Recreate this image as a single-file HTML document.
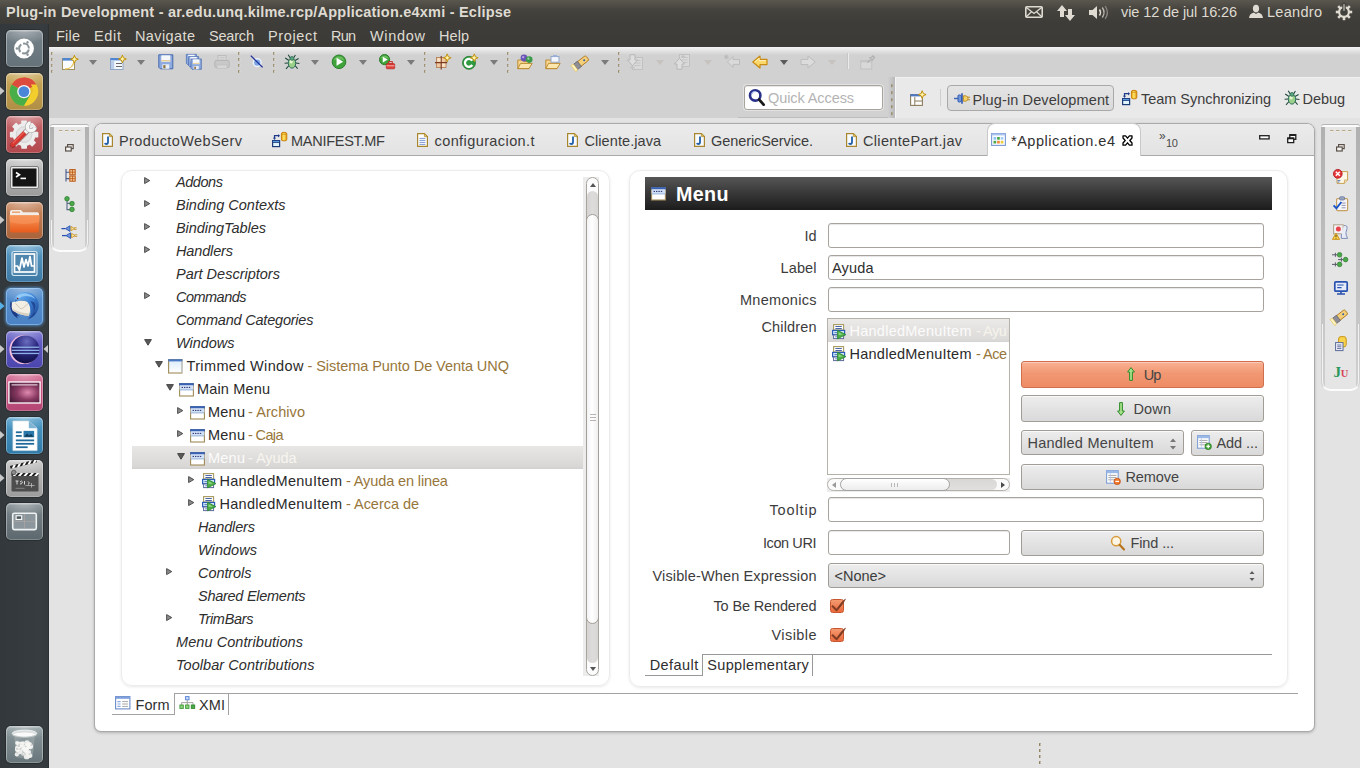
<!DOCTYPE html>
<html><head><meta charset="utf-8"><title>Eclipse</title>
<style>
html,body{margin:0;padding:0;}
body{width:1360px;height:768px;overflow:hidden;position:relative;background:#e3e3e3;font-family:"Liberation Sans",sans-serif;}
.t{position:absolute;white-space:nowrap;line-height:20px;height:20px;}
svg{overflow:visible;}
.inp{box-sizing:border-box;border:1px solid #a8a49d;border-radius:3px;background:#fff;box-shadow:inset 0 1px 1px rgba(0,0,0,.10);}
.btn{box-sizing:border-box;border:1px solid #a19d96;border-radius:3px;background:linear-gradient(#ededed,#d9d9d9);box-shadow:inset 0 1px 0 rgba(255,255,255,.7);}

</style></head><body>
<div style="position:absolute;left:0px;top:0px;width:1360px;height:47px;background:linear-gradient(#5a574f 0px,#45433d 10px,#3d3c38 24px,#3c3b37 47px);"></div>
<div style="position:absolute;left:49px;top:47px;width:1311px;height:71px;background:#d1d1d1;"></div>
<div style="position:absolute;left:49px;top:47px;width:1311px;height:8px;background:linear-gradient(#f4f4f4,#d1d1d1);"></div>
<div style="position:absolute;left:888px;top:77px;width:7px;height:41px;background:linear-gradient(90deg,#d0d0d0,#c2c2c2 60%,#b8b8b8);"></div>
<div style="position:absolute;left:895px;top:77px;width:465px;height:41px;background:#e9e9e9;box-shadow:inset 1px 0 0 #f6f6f6, inset 0 1px 0 #f1f1f1;"></div>
<div style="position:absolute;left:738px;top:117px;width:150px;height:1px;background:#bdbdbd;"></div>
<div style="position:absolute;left:0px;top:24px;width:49px;height:744px;background:linear-gradient(90deg,#32383b,#363c40 85%,#33393c);"></div>
<div style="position:absolute;left:48px;top:24px;width:1px;height:744px;background:#2c3134;"></div>
<span class="t" style="left:6px;top:2.0px;font-size:14.5px;color:#dfdbd2;letter-spacing:0.22px;font-weight:bold;">Plug-in Development - ar.edu.unq.kilme.rcp/Application.e4xmi - Eclipse</span>
<span class="t" style="left:56px;top:25.5px;font-size:14.5px;color:#dfdbd2;letter-spacing:0.21px;">File</span>
<span class="t" style="left:94px;top:25.5px;font-size:14.5px;color:#dfdbd2;letter-spacing:0.67px;">Edit</span>
<span class="t" style="left:135px;top:25.5px;font-size:14.5px;color:#dfdbd2;letter-spacing:0.40px;">Navigate</span>
<span class="t" style="left:209px;top:25.5px;font-size:14.5px;color:#dfdbd2;letter-spacing:-0.19px;">Search</span>
<span class="t" style="left:268px;top:25.5px;font-size:14.5px;color:#dfdbd2;letter-spacing:0.64px;">Project</span>
<span class="t" style="left:331px;top:25.5px;font-size:14.5px;color:#dfdbd2;letter-spacing:-0.80px;">Run</span>
<span class="t" style="left:370px;top:25.5px;font-size:14.5px;color:#dfdbd2;letter-spacing:0.68px;">Window</span>
<span class="t" style="left:439px;top:25.5px;font-size:14.5px;color:#dfdbd2;letter-spacing:0.06px;">Help</span>
<span class="t" style="left:1121px;top:2.0px;font-size:14.5px;color:#dfdbd2;letter-spacing:-0.09px;">vie 12 de jul 16:26</span>
<span class="t" style="left:1267px;top:2.0px;font-size:14.5px;color:#dfdbd2;letter-spacing:0.30px;">Leandro</span>
<svg style="position:absolute;left:1025px;top:6px" width="18" height="12" viewBox="0 0 18 12"><rect x="0.8" y="0.8" width="16.4" height="10.4" rx="1" fill="none" stroke="#dfdbd2" stroke-width="1.6"/><path d="M1 1.2 L9 7.5 L17 1.2 M1 11 L6.5 5.8 M17 11 L11.5 5.8" fill="none" stroke="#dfdbd2" stroke-width="1.3"/></svg>
<svg style="position:absolute;left:1057px;top:5px" width="18" height="16" viewBox="0 0 18 16"><path d="M5 0 L10 6 H7 V12 H3 V6 H0 Z" fill="#dfdbd2"/><path d="M13 16 L8 10 H11 V4 H15 V10 H18 Z" fill="#dfdbd2"/></svg>
<svg style="position:absolute;left:1089px;top:5px" width="20" height="15" viewBox="0 0 20 15"><path d="M0 5 H3.5 L8 1 V14 L3.5 10 H0 Z" fill="#dfdbd2"/><path d="M10.5 4.5 Q12.5 7.5 10.5 10.5" fill="none" stroke="#dfdbd2" stroke-width="1.5"/><path d="M13.3 2.5 Q16.8 7.5 13.3 12.5" fill="none" stroke="#b9b5ad" stroke-width="1.4"/><path d="M16.2 1 Q20.6 7.5 16.2 14" fill="none" stroke="#8d8a84" stroke-width="1.2"/></svg>
<svg style="position:absolute;left:1249px;top:5px" width="14" height="13" viewBox="0 0 14 13"><ellipse cx="7" cy="3.6" rx="3.1" ry="3.8" fill="#dfdbd2"/><path d="M0 13 Q0.5 8.5 5 7.6 L7 9 L9 7.6 Q13.5 8.5 14 13 Z" fill="#dfdbd2"/></svg>
<svg style="position:absolute;left:1336px;top:4px" width="16" height="16" viewBox="0 0 16 16"><circle cx="8" cy="8" r="4.9" fill="none" stroke="#dfdbd2" stroke-width="2.2"/><rect x="6.7" y="-0.2" width="2.6" height="3.4" fill="#dfdbd2" transform="rotate(45 8 8)"/><rect x="6.7" y="-0.2" width="2.6" height="3.4" fill="#dfdbd2" transform="rotate(90 8 8)"/><rect x="6.7" y="-0.2" width="2.6" height="3.4" fill="#dfdbd2" transform="rotate(135 8 8)"/><rect x="6.7" y="-0.2" width="2.6" height="3.4" fill="#dfdbd2" transform="rotate(180 8 8)"/><rect x="6.7" y="-0.2" width="2.6" height="3.4" fill="#dfdbd2" transform="rotate(225 8 8)"/><rect x="6.7" y="-0.2" width="2.6" height="3.4" fill="#dfdbd2" transform="rotate(270 8 8)"/><rect x="6.7" y="-0.2" width="2.6" height="3.4" fill="#dfdbd2" transform="rotate(315 8 8)"/><rect x="6.9" y="-0.5" width="2.2" height="8" fill="#dfdbd2" stroke="#3f3e3a" stroke-width="1.2"/></svg>
<div style="position:absolute;left:5.5px;top:29.5px;width:37px;height:37px;background:linear-gradient(#76828a,#66727a);border-radius:5px;box-shadow:inset 0 0 0 1px rgba(255,255,255,.22),inset 0 1px 0 1px rgba(255,255,255,.18),0 0 0 1px rgba(0,0,0,.22);overflow:hidden;"><div style="position:absolute;left:0;top:0;width:37px;height:37px;background:radial-gradient(ellipse 26px 14px at 50% 0%,rgba(255,255,255,.38),rgba(255,255,255,0));"></div><svg width="37" height="37" viewBox="0.5 0 37 37" style="position:absolute;left:0;top:0"><g transform="translate(-0.5 0)"><circle cx="19" cy="18.5" r="9.9" fill="#fff"/><circle cx="19" cy="18.5" r="4.9" fill="none" stroke="#8a9498" stroke-width="2" stroke-dasharray="8.4 1.86" stroke-dashoffset="-1"/><g transform="rotate(180 19 18.5)"><circle cx="26.1" cy="18.5" r="1.25" fill="#8a9498"/></g><g transform="rotate(-60 19 18.5)"><circle cx="26.1" cy="18.5" r="1.25" fill="#8a9498"/></g><g transform="rotate(60 19 18.5)"><circle cx="26.1" cy="18.5" r="1.25" fill="#8a9498"/></g></g></svg></div>
<div style="position:absolute;left:5.5px;top:72.5px;width:37px;height:37px;background:linear-gradient(#c9a85a,#b08f45);border-radius:5px;box-shadow:inset 0 0 0 1px rgba(255,255,255,.22),inset 0 1px 0 1px rgba(255,255,255,.18),0 0 0 1px rgba(0,0,0,.22);overflow:hidden;"><div style="position:absolute;left:0;top:0;width:37px;height:37px;background:radial-gradient(ellipse 26px 14px at 50% 0%,rgba(255,255,255,.38),rgba(255,255,255,0));"></div><svg width="37" height="37" viewBox="0.5 0 37 37" style="position:absolute;left:0;top:0"><g transform="translate(-0.6 0.1) translate(19 18.5) scale(1.05) translate(-19 -18.5)"><circle cx="19" cy="18.5" r="13.5" fill="#e8bf2a"/><path d="M19 18.5 L7.3 11.75 A13.5 13.5 0 0 1 30.7 11.75 Z" fill="#dd4b3e"/><path d="M19 5 A13.5 13.5 0 0 1 30.7 11.75 L19 11.75 Z" fill="#dd4b3e"/><path d="M7.3 11.75 A13.5 13.5 0 0 0 19 32 L24.8 21.9 L19 18.5 Z" fill="#4aae48"/><path d="M19 18.5 L13.2 21.9 L19 32 A13.5 13.5 0 0 0 19.5 32 L25 22 Z" fill="#4aae48"/><path d="M30.7 11.75 A13.5 13.5 0 0 1 19 32 L25 21.9 A6.8 6.8 0 0 0 25.6 11.75 Z" fill="#f3cf2e"/><circle cx="19" cy="18.5" r="6.4" fill="#f4f4f4"/><circle cx="19" cy="18.5" r="5.1" fill="#4a86d8"/></g></svg></div>
<svg style="position:absolute;left:0px;top:87px" width="5" height="8" viewBox="0 0 5 8"><path d="M0 0 L4.5 4 L0 8 Z" fill="#c8c8c8"/></svg>
<div style="position:absolute;left:5.5px;top:115.5px;width:37px;height:37px;background:linear-gradient(#c66a6e,#b2484e);border-radius:5px;box-shadow:inset 0 0 0 1px rgba(255,255,255,.22),inset 0 1px 0 1px rgba(255,255,255,.18),0 0 0 1px rgba(0,0,0,.22);overflow:hidden;"><div style="position:absolute;left:0;top:0;width:37px;height:37px;background:radial-gradient(ellipse 26px 14px at 50% 0%,rgba(255,255,255,.38),rgba(255,255,255,0));"></div><svg width="37" height="37" viewBox="0.5 0 37 37" style="position:absolute;left:0;top:0"><rect x="15.7" y="4.4" width="5.8" height="6" rx=".8" fill="#ededed" transform="rotate(0 18.6 18.6)"/><rect x="15.7" y="4.4" width="5.8" height="6" rx=".8" fill="#ededed" transform="rotate(45 18.6 18.6)"/><rect x="15.7" y="4.4" width="5.8" height="6" rx=".8" fill="#ededed" transform="rotate(90 18.6 18.6)"/><rect x="15.7" y="4.4" width="5.8" height="6" rx=".8" fill="#ededed" transform="rotate(135 18.6 18.6)"/><rect x="15.7" y="4.4" width="5.8" height="6" rx=".8" fill="#ededed" transform="rotate(180 18.6 18.6)"/><rect x="15.7" y="4.4" width="5.8" height="6" rx=".8" fill="#ededed" transform="rotate(225 18.6 18.6)"/><rect x="15.7" y="4.4" width="5.8" height="6" rx=".8" fill="#ededed" transform="rotate(270 18.6 18.6)"/><rect x="15.7" y="4.4" width="5.8" height="6" rx=".8" fill="#ededed" transform="rotate(315 18.6 18.6)"/><circle cx="18.6" cy="18.6" r="11.4" fill="#ededed"/><circle cx="18.6" cy="18.6" r="7.8" fill="#e4e4e4" stroke="#d2d2d2" stroke-width="1"/><path d="M7.4 29.2 L20.6 16" stroke="#7a1616" stroke-width="5.4" stroke-linecap="round" opacity=".55"/><path d="M7.2 28.8 L20.4 15.6" stroke="#d8352e" stroke-width="4.4" stroke-linecap="round"/><path d="M7.6 27.2 L19.6 15.2" stroke="#f0746a" stroke-width="1.1" stroke-linecap="round" opacity=".8"/><path d="M19.4 16.8 L23 13.2" stroke="#9a9a9a" stroke-width="5" /><path d="M19.6 16.6 L23.2 13" stroke="#f4f4f4" stroke-width="3.8"/><path d="M29.47 11.28 A3.9 3.9 0 1 1 25.12 6.93" fill="none" stroke="#9c9c9c" stroke-width="4.4" stroke-linecap="butt"/><path d="M29.47 11.28 A3.9 3.9 0 1 1 25.12 6.93" fill="none" stroke="#f6f6f6" stroke-width="3.4" stroke-linecap="butt"/></svg></div>
<div style="position:absolute;left:5.5px;top:158.5px;width:37px;height:37px;background:linear-gradient(#c4c4c4,#9b9b9b);border-radius:5px;box-shadow:inset 0 0 0 1px rgba(255,255,255,.22),inset 0 1px 0 1px rgba(255,255,255,.18),0 0 0 1px rgba(0,0,0,.22);overflow:hidden;"><div style="position:absolute;left:0;top:0;width:37px;height:37px;background:radial-gradient(ellipse 26px 14px at 50% 0%,rgba(255,255,255,.38),rgba(255,255,255,0));"></div><svg width="37" height="37" viewBox="0.5 0 37 37" style="position:absolute;left:0;top:0"><rect x="5" y="7.5" width="28" height="22" rx="1.5" fill="#e9e9e9" stroke="#7c7c7c" stroke-width="1"/><rect x="7" y="9.5" width="24" height="18" fill="#141414"/><path d="M10.5 13.5 L14 15.7 L10.5 18" fill="none" stroke="#fff" stroke-width="1.6"/><rect x="15" y="18.6" width="5.5" height="1.6" fill="#fff"/></svg></div>
<div style="position:absolute;left:5.5px;top:201.5px;width:37px;height:37px;background:linear-gradient(#c98a62,#a9623a);border-radius:5px;box-shadow:inset 0 0 0 1px rgba(255,255,255,.22),inset 0 1px 0 1px rgba(255,255,255,.18),0 0 0 1px rgba(0,0,0,.22);overflow:hidden;"><div style="position:absolute;left:0;top:0;width:37px;height:37px;background:radial-gradient(ellipse 26px 14px at 50% 0%,rgba(255,255,255,.38),rgba(255,255,255,0));"></div><svg width="37" height="37" viewBox="0.5 0 37 37" style="position:absolute;left:0;top:0"><path d="M4.5 10 Q4.5 8 6.5 8 H15.5 L17.5 10.2 H32 Q33.5 10.2 33.5 12 V14 H4.5 Z" fill="#f4ede6"/><rect x="6.5" y="9.6" width="8" height="1.1" fill="#e8874a"/><defs><linearGradient id="flg" x1="0" y1="0" x2="0" y2="1"><stop offset="0" stop-color="#f79a5a"/><stop offset="1" stop-color="#e85a1c"/></linearGradient></defs><path d="M4 13.2 H34 L33.2 29 Q33 30.5 31.5 30.5 H6.5 Q5 30.5 4.8 29 Z" fill="url(#flg)"/><path d="M4 13.2 H34 L33.7 20 Q19 24 4.4 20 Z" fill="#f7935a" opacity=".7"/></svg></div>
<svg style="position:absolute;left:0px;top:216px" width="5" height="8" viewBox="0 0 5 8"><path d="M0 0 L4.5 4 L0 8 Z" fill="#c8c8c8"/></svg>
<div style="position:absolute;left:5.5px;top:244.5px;width:37px;height:37px;background:linear-gradient(#5a9cc6,#3c78a3);border-radius:5px;box-shadow:inset 0 0 0 1px rgba(255,255,255,.22),inset 0 1px 0 1px rgba(255,255,255,.18),0 0 0 1px rgba(0,0,0,.22);overflow:hidden;"><div style="position:absolute;left:0;top:0;width:37px;height:37px;background:radial-gradient(ellipse 26px 14px at 50% 0%,rgba(255,255,255,.38),rgba(255,255,255,0));"></div><svg width="37" height="37" viewBox="0.5 0 37 37" style="position:absolute;left:0;top:0"><rect x="6.5" y="6.5" width="25" height="24" rx="2" fill="#4f86ad" stroke="#d6e7f2" stroke-width="1.2"/><rect x="9" y="9" width="20" height="18" fill="none" stroke="#fff" stroke-width="1.7"/><path d="M9.5 21 L12 21 L14 25 L16.5 13 L18.5 22 L20.5 14.5 L22.5 21 L24.5 11.5 L26 21 L28.5 21" fill="none" stroke="#fff" stroke-width="1.7" stroke-linejoin="round"/></svg></div>
<div style="position:absolute;left:5.5px;top:287.5px;width:37px;height:37px;background:linear-gradient(#5a92d0,#4a82c4);border-radius:5px;box-shadow:inset 0 0 0 1px rgba(255,255,255,.22),inset 0 1px 0 1px rgba(255,255,255,.18),0 0 0 1px rgba(0,0,0,.22);overflow:hidden;box-shadow:inset 0 0 0 1px rgba(160,210,255,.55),0 0 3px 1px rgba(90,160,230,.7);"><div style="position:absolute;left:0;top:0;width:37px;height:37px;background:radial-gradient(ellipse 26px 14px at 50% 0%,rgba(255,255,255,.38),rgba(255,255,255,0));"></div><svg width="37" height="37" viewBox="0.5 0 37 37" style="position:absolute;left:0;top:0"><defs><linearGradient id="tbg" x1="0" y1="0" x2="1" y2="1"><stop offset="0" stop-color="#7ec0f4"/><stop offset=".45" stop-color="#3f86d8"/><stop offset="1" stop-color="#1c3f8c"/></linearGradient></defs><path d="M5.4 12.5 Q3.4 19 6.6 25 Q9 29 12.4 30.4 L11.4 27.6 L14 28.6 Q9 24 7 17 Z" fill="#1d3a86"/><path d="M6.4 14.4 Q14 11.2 23.4 14.2 Q26 20.6 23.4 27.8 Q14.6 27.2 7 22.4 Q5.6 18.6 6.4 14.4 Z" fill="#f3eee4"/><path d="M8 23 Q15 27.6 23 27.8 L23.6 25.6 Q15 25 7.4 21 Z" fill="#d9d0c0"/><path d="M10 15.4 L14.6 20.4 Q16 21.2 17.4 20.2 L23 15.2" fill="none" stroke="#cfc6b6" stroke-width="1"/><path d="M9.4 13.8 Q8.6 10.4 10.6 8 Q13 4.6 19 4 Q27 4 31 10 Q34.4 15.6 32.6 21.4 Q30.4 28 22 31.6 Q26.4 27.4 25.4 22 Q24.8 17 21.6 13.4 Q18.6 11 15 11.8 Q12.8 12.2 12 13.6 Q10.6 12.8 9.4 13.8 Z" fill="url(#tbg)"/><path d="M11 8.6 Q15 5 21 5.4 Q27 6.2 30 11 Q26 8 21 8 Q15.4 8 13 11 Z" fill="#9fd2fa" opacity=".8"/><path d="M24.6 13 Q28.6 17.4 28.4 23.4 Q30.8 19 29 14.6 Z M22.6 30.8 Q27.6 27.6 29.4 23.4 Q30.6 26 27 29 Z" fill="#1c3c8a" opacity=".75"/><circle cx="12.2" cy="10.6" r=".8" fill="#7a1a1a"/><path d="M9.4 13.8 L10 11.2 L11.8 12.6 Z" fill="#2a5cb0"/></svg></div>
<svg style="position:absolute;left:0px;top:302px" width="5" height="8" viewBox="0 0 5 8"><path d="M0 0 L4.5 4 L0 8 Z" fill="#58b0e8"/></svg>
<div style="position:absolute;left:5.5px;top:330.5px;width:37px;height:37px;background:linear-gradient(#6c68ca,#4a44ae);border-radius:5px;box-shadow:inset 0 0 0 1px rgba(255,255,255,.22),inset 0 1px 0 1px rgba(255,255,255,.18),0 0 0 1px rgba(0,0,0,.22);overflow:hidden;"><div style="position:absolute;left:0;top:0;width:37px;height:37px;background:radial-gradient(ellipse 26px 14px at 50% 0%,rgba(255,255,255,.38),rgba(255,255,255,0));"></div><svg width="37" height="37" viewBox="0.5 0 37 37" style="position:absolute;left:0;top:0"><defs><radialGradient id="ecg" cx="0.55" cy="0.22" r="0.85"><stop offset="0" stop-color="#6a6cc0"/><stop offset="0.45" stop-color="#2c2a80"/><stop offset="1" stop-color="#0c0a3c"/></radialGradient></defs><circle cx="18.3" cy="18.7" r="14.4" fill="#f3bfe0"/><circle cx="19.8" cy="18.4" r="14" fill="url(#ecg)"/><rect x="6.6" y="15.6" width="27" height="1.3" fill="#8fb2e6"/><rect x="6.2" y="18.7" width="27.6" height="1.3" fill="#8fb2e6"/><rect x="6.6" y="21.8" width="27" height="1.3" fill="#8fb2e6"/></svg></div>
<svg style="position:absolute;left:0px;top:345px" width="5" height="8" viewBox="0 0 5 8"><path d="M0 0 L4.5 4 L0 8 Z" fill="#c8c8c8"/></svg>
<svg style="position:absolute;left:43px;top:345px" width="5" height="8" viewBox="0 0 5 8"><path d="M5 0 L0.5 4 L5 8 Z" fill="#c8c8c8"/></svg>
<div style="position:absolute;left:5.5px;top:373.5px;width:37px;height:37px;background:linear-gradient(#d0628c,#b44574);border-radius:5px;box-shadow:inset 0 0 0 1px rgba(255,255,255,.22),inset 0 1px 0 1px rgba(255,255,255,.18),0 0 0 1px rgba(0,0,0,.22);overflow:hidden;"><div style="position:absolute;left:0;top:0;width:37px;height:37px;background:radial-gradient(ellipse 26px 14px at 50% 0%,rgba(255,255,255,.38),rgba(255,255,255,0));"></div><svg width="37" height="37" viewBox="0.5 0 37 37" style="position:absolute;left:0;top:0"><defs><radialGradient id="pkg" cx="0.6" cy="0.5" r="0.75"><stop offset="0" stop-color="#e08ab0"/><stop offset="0.45" stop-color="#8a3a62"/><stop offset="1" stop-color="#3a1430"/></radialGradient></defs><rect x="3.4" y="8" width="31.2" height="21" fill="url(#pkg)" stroke="#fff" stroke-width="1.3"/><rect x="6" y="10.4" width="26" height="1" fill="#f6eaf2"/></svg></div>
<div style="position:absolute;left:5.5px;top:416.5px;width:37px;height:37px;background:linear-gradient(#4f9cc8,#2f7aa8);border-radius:5px;box-shadow:inset 0 0 0 1px rgba(255,255,255,.22),inset 0 1px 0 1px rgba(255,255,255,.18),0 0 0 1px rgba(0,0,0,.22);overflow:hidden;"><div style="position:absolute;left:0;top:0;width:37px;height:37px;background:radial-gradient(ellipse 26px 14px at 50% 0%,rgba(255,255,255,.38),rgba(255,255,255,0));"></div><svg width="37" height="37" viewBox="0.5 0 37 37" style="position:absolute;left:0;top:0"><g transform="translate(19.5 18.8) scale(1.18 1.04) translate(-19.75 -18.75)"><path d="M9.5 4.5 H23 L30 11.5 V33 H9.5 Z" fill="#fff" stroke="#d0dbe2" stroke-width="0.6"/><path d="M23 4.5 L30 11.5 H23 Z" fill="#7fb3d4"/><rect x="12" y="14.5" width="5" height="1.7" fill="#1f6a9a"/><rect x="12" y="18" width="5" height="1.7" fill="#1f6a9a"/><rect x="18.5" y="14" width="9" height="6.2" fill="#2a78aa"/><path d="M19 19.6 L21.5 16.5 L23.3 18.5 L25 17 L27 19.6 Z" fill="#123e5c"/><rect x="12" y="22.3" width="15.5" height="1.7" fill="#1f6a9a"/><rect x="12" y="25.6" width="15.5" height="1.7" fill="#1f6a9a"/><rect x="12" y="28.9" width="10" height="1.7" fill="#1f6a9a"/></g></svg></div>
<svg style="position:absolute;left:0px;top:431px" width="5" height="8" viewBox="0 0 5 8"><path d="M0 0 L4.5 4 L0 8 Z" fill="#c8c8c8"/></svg>
<div style="position:absolute;left:5.5px;top:459.5px;width:37px;height:37px;background:linear-gradient(#c2c2c2,#9c9c9c);border-radius:5px;box-shadow:inset 0 0 0 1px rgba(255,255,255,.22),inset 0 1px 0 1px rgba(255,255,255,.18),0 0 0 1px rgba(0,0,0,.22);overflow:hidden;"><div style="position:absolute;left:0;top:0;width:37px;height:37px;background:radial-gradient(ellipse 26px 14px at 50% 0%,rgba(255,255,255,.38),rgba(255,255,255,0));"></div><svg width="37" height="37" viewBox="0.5 0 37 37" style="position:absolute;left:0;top:0"><rect x="6" y="16" width="27" height="15.5" rx="1" fill="#4d4d4d"/><rect x="6" y="13" width="27" height="3" fill="#1d1d1d"/><path d="M7.0 16 L9.6 13 H12.3 L9.7 16 Z" fill="#fff"/><path d="M12.4 16 L15.0 13 H17.700000000000003 L15.1 16 Z" fill="#fff"/><path d="M17.8 16 L20.4 13 H23.1 L20.5 16 Z" fill="#fff"/><path d="M23.200000000000003 16 L25.800000000000004 13 H28.500000000000004 L25.900000000000002 16 Z" fill="#fff"/><path d="M28.6 16 L31.200000000000003 13 H33.900000000000006 L31.3 16 Z" fill="#fff"/><g transform="rotate(-14 7 12)"><rect x="6" y="5.5" width="27" height="3" fill="#1d1d1d"/><path d="M7.0 8.5 L9.6 5.5 H12.3 L9.7 8.5 Z" fill="#fff"/><path d="M12.4 8.5 L15.0 5.5 H17.700000000000003 L15.1 8.5 Z" fill="#fff"/><path d="M17.8 8.5 L20.4 5.5 H23.1 L20.5 8.5 Z" fill="#fff"/><path d="M23.200000000000003 8.5 L25.800000000000004 5.5 H28.500000000000004 L25.900000000000002 8.5 Z" fill="#fff"/><path d="M28.6 8.5 L31.200000000000003 5.5 H33.900000000000006 L31.3 8.5 Z" fill="#fff"/></g><circle cx="8.3" cy="12.5" r="2.3" fill="#8a8a8a" stroke="#333" stroke-width="0.6"/><path d="M10 21 h3 m-1.5 0 v3.5 M14.5 22 q1.5 -2 2.5 0 q-1 2.5 -2.5 2 M19 21 v3.5 M22.5 21.5 q2 1 0.5 3" stroke="#e6e6e6" stroke-width="0.9" fill="none"/><path d="M20 25.5 h9 M26 23 v4.5" stroke="#c9c9c9" stroke-width="0.7"/><path d="M10 28.3 h9" stroke="#9a9a9a" stroke-width="0.7"/></svg></div>
<svg style="position:absolute;left:0px;top:474px" width="5" height="8" viewBox="0 0 5 8"><path d="M0 0 L4.5 4 L0 8 Z" fill="#c8c8c8"/></svg>
<div style="position:absolute;left:5.5px;top:502.5px;width:37px;height:37px;background:linear-gradient(#7b878c,#5c686e);border-radius:5px;box-shadow:inset 0 0 0 1px rgba(255,255,255,.22),inset 0 1px 0 1px rgba(255,255,255,.18),0 0 0 1px rgba(0,0,0,.22);overflow:hidden;"><div style="position:absolute;left:0;top:0;width:37px;height:37px;background:radial-gradient(ellipse 26px 14px at 50% 0%,rgba(255,255,255,.38),rgba(255,255,255,0));"></div><svg width="37" height="37" viewBox="0.5 0 37 37" style="position:absolute;left:0;top:0"><rect x="7.2" y="10.2" width="23.6" height="16.4" rx="1.5" fill="#8b979c" stroke="#eef2f3" stroke-width="1.6"/><path d="M19 11 V26 M8 18.4 H30" stroke="#b7a6a6" stroke-width="0.6"/><rect x="10.6" y="12.8" width="5.6" height="3.6" fill="#4a555a" stroke="#fff" stroke-width="1.1"/></svg></div>
<div style="position:absolute;left:5.5px;top:725.5px;width:37px;height:37px;background:linear-gradient(#8c9a9e,#68767b);border-radius:5px;box-shadow:inset 0 0 0 1px rgba(255,255,255,.22),inset 0 1px 0 1px rgba(255,255,255,.18),0 0 0 1px rgba(0,0,0,.22);overflow:hidden;"><div style="position:absolute;left:0;top:0;width:37px;height:37px;background:radial-gradient(ellipse 26px 14px at 50% 0%,rgba(255,255,255,.38),rgba(255,255,255,0));"></div><svg width="37" height="37" viewBox="0.5 0 37 37" style="position:absolute;left:0;top:0"><defs><linearGradient id="trg" x1="0" x2="1"><stop offset="0" stop-color="#aab4b6"/><stop offset=".5" stop-color="#8e9a9e"/><stop offset="1" stop-color="#aab4b6"/></linearGradient></defs><path d="M13.6 8 L15.8 31 Q24 33.4 32.2 31 L34.4 8 Z" fill="url(#trg)" opacity=".55" transform="translate(-5 0)"/><g transform="translate(-5 0)"><circle cx="20.8" cy="18.2" r="2.6" fill="#f6f6f4" opacity=".9"/><circle cx="16.7" cy="23.8" r="2.2" fill="#f6f6f4" opacity=".9"/><circle cx="16.5" cy="23.4" r="1.7" fill="#f6f6f4" opacity=".9"/><circle cx="22.7" cy="17.0" r="1.7" fill="#f6f6f4" opacity=".9"/><circle cx="22.5" cy="28.0" r="1.8" fill="#f6f6f4" opacity=".9"/><circle cx="19.2" cy="25.1" r="3.1" fill="#f6f6f4" opacity=".9"/><circle cx="25.0" cy="21.8" r="3.2" fill="#f6f6f4" opacity=".9"/><circle cx="16.3" cy="28.4" r="2.1" fill="#f6f6f4" opacity=".9"/><circle cx="17.9" cy="17.7" r="2.1" fill="#f6f6f4" opacity=".9"/><circle cx="29.0" cy="18.6" r="2.5" fill="#f6f6f4" opacity=".9"/><circle cx="26.0" cy="21.4" r="2.5" fill="#f6f6f4" opacity=".9"/><circle cx="16.5" cy="16.9" r="1.9" fill="#f6f6f4" opacity=".9"/><circle cx="26.7" cy="22.2" r="2.1" fill="#f6f6f4" opacity=".9"/><circle cx="25.2" cy="22.6" r="2.1" fill="#f6f6f4" opacity=".9"/><circle cx="28.6" cy="26.1" r="2.0" fill="#f6f6f4" opacity=".9"/><circle cx="25.0" cy="23.6" r="3.0" fill="#f6f6f4" opacity=".9"/><circle cx="27.5" cy="20.2" r="3.2" fill="#f6f6f4" opacity=".9"/><circle cx="17.4" cy="22.1" r="2.8" fill="#f6f6f4" opacity=".9"/><circle cx="18.0" cy="23.1" r="1.7" fill="#f6f6f4" opacity=".9"/><circle cx="26.5" cy="27.1" r="2.5" fill="#f6f6f4" opacity=".9"/><circle cx="29.9" cy="20.5" r="2.7" fill="#f6f6f4" opacity=".9"/><circle cx="25.3" cy="24.4" r="2.3" fill="#f6f6f4" opacity=".9"/><circle cx="29.4" cy="29.7" r="2.4" fill="#f6f6f4" opacity=".9"/><circle cx="26.5" cy="16.9" r="2.7" fill="#f6f6f4" opacity=".9"/><circle cx="26.2" cy="30.4" r="2.9" fill="#f6f6f4" opacity=".9"/><circle cx="20.2" cy="21.6" r="2.7" fill="#f6f6f4" opacity=".9"/><circle cx="16.3" cy="23.0" r=".9" fill="#c9cccc" opacity=".8"/><circle cx="18.6" cy="18.5" r=".9" fill="#c9cccc" opacity=".8"/><circle cx="16.9" cy="27.0" r=".9" fill="#c9cccc" opacity=".8"/><circle cx="18.0" cy="20.2" r=".9" fill="#c9cccc" opacity=".8"/><circle cx="22.1" cy="28.3" r=".9" fill="#c9cccc" opacity=".8"/><circle cx="17.2" cy="22.8" r=".9" fill="#c9cccc" opacity=".8"/><circle cx="24.5" cy="28.5" r=".9" fill="#c9cccc" opacity=".8"/><circle cx="28.7" cy="28.2" r=".9" fill="#c9cccc" opacity=".8"/><circle cx="20.3" cy="22.4" r=".9" fill="#c9cccc" opacity=".8"/><circle cx="21.6" cy="28.5" r=".9" fill="#c9cccc" opacity=".8"/><circle cx="30.8" cy="19.0" r=".9" fill="#c9cccc" opacity=".8"/><circle cx="18.7" cy="20.0" r=".9" fill="#c9cccc" opacity=".8"/><circle cx="19.6" cy="23.3" r=".9" fill="#c9cccc" opacity=".8"/><circle cx="25.1" cy="20.4" r=".9" fill="#c9cccc" opacity=".8"/></g><ellipse cx="19" cy="7.4" rx="12.2" ry="3.2" fill="#d9dddd" stroke="#f2f4f4" stroke-width="1"/><ellipse cx="19" cy="8.4" rx="10.6" ry="2" fill="#ffffff" opacity=".85"/><path d="M7.2 9.2 Q19 13.4 30.8 9.2" fill="none" stroke="#c4caca" stroke-width="1"/></svg></div>
<svg style="position:absolute;left:50.8px;top:52.2px" width="3" height="20" viewBox="0 0 3 20"><rect x="0" y="0" width="1.5" height="2.8" rx=".5" fill="#9a8c6c"/><rect x="1.5" y="0.8" width=".8" height="1.6" fill="#ebe7dd"/><rect x="0" y="6" width="1.5" height="2.8" rx=".5" fill="#9a8c6c"/><rect x="1.5" y="6.8" width=".8" height="1.6" fill="#ebe7dd"/><rect x="0" y="12" width="1.5" height="2.8" rx=".5" fill="#9a8c6c"/><rect x="1.5" y="12.8" width=".8" height="1.6" fill="#ebe7dd"/><rect x="0" y="18" width="1.5" height="2.8" rx=".5" fill="#9a8c6c"/><rect x="1.5" y="18.8" width=".8" height="1.6" fill="#ebe7dd"/></svg>
<svg style="position:absolute;left:62px;top:54.6px" width="16" height="16" viewBox="0 0 16 16"><rect x="0.5" y="3.5" width="12" height="11" fill="#fafcff" stroke="#a09060" stroke-width="1"/><rect x="0.5" y="3" width="12" height="2.6" fill="#4f86cf"/><path d="M3 14 Q11 14 12 6" fill="none" stroke="#e9c860" stroke-width="1.3"/><path d="M12.4 0.30000000000000027 L13.5 3.1 L16.3 4.2 L13.5 5.300000000000001 L12.4 8.1 L11.3 5.300000000000001 L8.5 4.2 L11.3 3.1 Z" fill="#fff4a8" stroke="#c2900a" stroke-width="1" stroke-linejoin="round"/></svg>
<svg style="position:absolute;left:88.5px;top:60.0px" width="8" height="5" viewBox="0 0 8 5"><path d="M0 0 H8 L4 5 Z" fill="#7b7b7b"/></svg>
<svg style="position:absolute;left:110px;top:54.6px" width="16" height="16" viewBox="0 0 16 16"><rect x="0.5" y="3.5" width="12.5" height="11" fill="#f4f8fd" stroke="#8fa6c8" stroke-width="1"/><rect x="0.5" y="3" width="12.5" height="2.4" fill="#4f86cf"/><rect x="1" y="5.5" width="3.2" height="8.5" fill="#b9cdea"/><path d="M6 8.5 H12 M6 11.5 H12" stroke="#6a6a6a" stroke-width="1.2"/><path d="M12.4 0.10000000000000009 L13.5 2.9 L16.3 4.0 L13.5 5.1 L12.4 7.9 L11.3 5.1 L8.5 4.0 L11.3 2.9 Z" fill="#fff4a8" stroke="#c2900a" stroke-width="1" stroke-linejoin="round"/></svg>
<svg style="position:absolute;left:136.5px;top:60.0px" width="8" height="5" viewBox="0 0 8 5"><path d="M0 0 H8 L4 5 Z" fill="#7b7b7b"/></svg>
<svg style="position:absolute;left:158px;top:54px" width="16" height="16" viewBox="0 0 16 16"><g transform="translate(0.3 0.3) scale(1.0)"><path d="M0.5 0.5 H14.5 V14.5 H2 L0.5 13 Z" fill="#8eaade" stroke="#4568ae" stroke-width="1"/><rect x="3" y="1" width="9" height="6.5" fill="#f4f7fb"/><rect x="3" y="5.8" width="9" height="1.2" fill="#e6c88a"/><rect x="4" y="10" width="7" height="4.5" fill="#e8edf5"/><rect x="5" y="10.8" width="2.2" height="3.2" fill="#8a7440"/></g></svg>
<svg style="position:absolute;left:186px;top:54px" width="16" height="16" viewBox="0 0 16 16"><g transform="translate(0 0) scale(0.72)"><path d="M0.5 0.5 H14.5 V14.5 H2 L0.5 13 Z" fill="#8eaade" stroke="#4568ae" stroke-width="1"/><rect x="3" y="1" width="9" height="6.5" fill="#f4f7fb"/><rect x="3" y="5.8" width="9" height="1.2" fill="#e6c88a"/><rect x="4" y="10" width="7" height="4.5" fill="#e8edf5"/><rect x="5" y="10.8" width="2.2" height="3.2" fill="#8a7440"/></g><g transform="translate(2.2 2.2) scale(0.72)"><path d="M0.5 0.5 H14.5 V14.5 H2 L0.5 13 Z" fill="#8eaade" stroke="#4568ae" stroke-width="1"/><rect x="3" y="1" width="9" height="6.5" fill="#f4f7fb"/><rect x="3" y="5.8" width="9" height="1.2" fill="#e6c88a"/><rect x="4" y="10" width="7" height="4.5" fill="#e8edf5"/><rect x="5" y="10.8" width="2.2" height="3.2" fill="#8a7440"/></g><g transform="translate(4.6 4.6) scale(0.74)"><path d="M0.5 0.5 H14.5 V14.5 H2 L0.5 13 Z" fill="#8eaade" stroke="#4568ae" stroke-width="1"/><rect x="3" y="1" width="9" height="6.5" fill="#f4f7fb"/><rect x="3" y="5.8" width="9" height="1.2" fill="#e6c88a"/><rect x="4" y="10" width="7" height="4.5" fill="#e8edf5"/><rect x="5" y="10.8" width="2.2" height="3.2" fill="#8a7440"/></g></svg>
<svg style="position:absolute;left:214px;top:54px" width="16" height="16" viewBox="0 0 16 16"><rect x="4" y="1.5" width="8" height="6" fill="#d9d9d9" stroke="#bdbdbd"/><rect x="0.8" y="6.5" width="14.4" height="7" rx="1.2" fill="#c8c8c8" stroke="#b6b6b6"/><rect x="3" y="11" width="10" height="3.5" fill="#d6d6d6" stroke="#bdbdbd" stroke-width=".6"/><path d="M5.5 3.4 H10.5 M5.5 5.2 H10.5" stroke="#bfbfbf" stroke-width=".7"/></svg>
<svg style="position:absolute;left:237.8px;top:52.2px" width="3" height="20" viewBox="0 0 3 20"><rect x="0" y="0" width="1.5" height="2.8" rx=".5" fill="#9a8c6c"/><rect x="1.5" y="0.8" width=".8" height="1.6" fill="#ebe7dd"/><rect x="0" y="6" width="1.5" height="2.8" rx=".5" fill="#9a8c6c"/><rect x="1.5" y="6.8" width=".8" height="1.6" fill="#ebe7dd"/><rect x="0" y="12" width="1.5" height="2.8" rx=".5" fill="#9a8c6c"/><rect x="1.5" y="12.8" width=".8" height="1.6" fill="#ebe7dd"/><rect x="0" y="18" width="1.5" height="2.8" rx=".5" fill="#9a8c6c"/><rect x="1.5" y="18.8" width=".8" height="1.6" fill="#ebe7dd"/></svg>
<svg style="position:absolute;left:250px;top:54px" width="16" height="16" viewBox="0 0 16 16"><circle cx="7.2" cy="8.6" r="3.9" fill="#7fa7e0" stroke="#eef3fb" stroke-width="1.4"/><path d="M0.8 1.6 L12.6 13.4" stroke="#1a2a9a" stroke-width="1.3"/></svg>
<svg style="position:absolute;left:272.8px;top:52.2px" width="3" height="20" viewBox="0 0 3 20"><rect x="0" y="0" width="1.5" height="2.8" rx=".5" fill="#9a8c6c"/><rect x="1.5" y="0.8" width=".8" height="1.6" fill="#ebe7dd"/><rect x="0" y="6" width="1.5" height="2.8" rx=".5" fill="#9a8c6c"/><rect x="1.5" y="6.8" width=".8" height="1.6" fill="#ebe7dd"/><rect x="0" y="12" width="1.5" height="2.8" rx=".5" fill="#9a8c6c"/><rect x="1.5" y="12.8" width=".8" height="1.6" fill="#ebe7dd"/><rect x="0" y="18" width="1.5" height="2.8" rx=".5" fill="#9a8c6c"/><rect x="1.5" y="18.8" width=".8" height="1.6" fill="#ebe7dd"/></svg>
<svg style="position:absolute;left:283.5px;top:53.5px" width="16" height="16" viewBox="0 0 16 16"><path d="M5 6.5 L1.2 4 M4.2 9 L0.6 9.3 M5 11.5 L2 14.8 M11 6.5 L14.6 4.4 M11.8 9 L15.4 9.5 M11 11.5 L13.6 14.6 M6.4 4.2 L4.2 0.8 M9.4 4.2 L11.4 1" stroke="#1f4a3a" stroke-width="1.1" fill="none"/><ellipse cx="8" cy="9.2" rx="3.7" ry="4.9" fill="#9bd08a" stroke="#2a6a5a" stroke-width="1"/><ellipse cx="7.2" cy="7.6" rx="1.6" ry="2" fill="#e4f6cf"/><circle cx="8" cy="4.4" r="1.9" fill="#5fa77a" stroke="#2a6a5a" stroke-width=".8"/></svg>
<svg style="position:absolute;left:310.5px;top:60.0px" width="8" height="5" viewBox="0 0 8 5"><path d="M0 0 H8 L4 5 Z" fill="#7b7b7b"/></svg>
<svg style="position:absolute;left:331px;top:54px" width="16" height="16" viewBox="0 0 16 16"><circle cx="8" cy="7.8" r="6.8" fill="#3fa33a" stroke="#2b7f2c" stroke-width="1"/><path d="M2.5599999999999996 6.4399999999999995 A5.779999999999999 5.779999999999999 0 0 1 13.440000000000001 6.4399999999999995 Q8 4.06 2.5599999999999996 6.4399999999999995 Z" fill="#8fd67e" opacity=".55"/><path d="M5.552 3.8560000000000003 L12.216000000000001 7.8 L5.552 11.744 Z" fill="#fff"/></svg>
<svg style="position:absolute;left:358.5px;top:60.0px" width="8" height="5" viewBox="0 0 8 5"><path d="M0 0 H8 L4 5 Z" fill="#7b7b7b"/></svg>
<svg style="position:absolute;left:379px;top:54px" width="16" height="16" viewBox="0 0 16 16"><circle cx="5.6" cy="5.6" r="5.1" fill="#3fa33a" stroke="#2b7f2c" stroke-width="1"/><path d="M1.5199999999999996 4.58 A4.335 4.335 0 0 1 9.68 4.58 Q5.6 2.7949999999999995 1.5199999999999996 4.58 Z" fill="#8fd67e" opacity=".55"/><path d="M3.764 2.642 L8.762 5.6 L3.764 8.558 Z" fill="#fff"/><rect x="7.3" y="9.6" width="8.4" height="5.2" rx="1" fill="#e0433c" stroke="#b02420" stroke-width=".7"/><rect x="9.7" y="7.6" width="3.6" height="2.4" fill="none" stroke="#c7302b" stroke-width="1"/><rect x="7.6" y="11.3" width="7.8" height="1" fill="#f6b1ac"/></svg>
<svg style="position:absolute;left:406.5px;top:60.0px" width="8" height="5" viewBox="0 0 8 5"><path d="M0 0 H8 L4 5 Z" fill="#7b7b7b"/></svg>
<svg style="position:absolute;left:423.8px;top:52.2px" width="3" height="20" viewBox="0 0 3 20"><rect x="0" y="0" width="1.5" height="2.8" rx=".5" fill="#9a8c6c"/><rect x="1.5" y="0.8" width=".8" height="1.6" fill="#ebe7dd"/><rect x="0" y="6" width="1.5" height="2.8" rx=".5" fill="#9a8c6c"/><rect x="1.5" y="6.8" width=".8" height="1.6" fill="#ebe7dd"/><rect x="0" y="12" width="1.5" height="2.8" rx=".5" fill="#9a8c6c"/><rect x="1.5" y="12.8" width=".8" height="1.6" fill="#ebe7dd"/><rect x="0" y="18" width="1.5" height="2.8" rx=".5" fill="#9a8c6c"/><rect x="1.5" y="18.8" width=".8" height="1.6" fill="#ebe7dd"/></svg>
<svg style="position:absolute;left:435px;top:54px" width="16" height="16" viewBox="0 0 16 16"><rect x="1.5" y="3.5" width="9.5" height="10" fill="#f1c9a0" stroke="#b07850" stroke-width=".8"/><path d="M6.2 2 V15.5 M0 8.6 H12.2" stroke="#7a3a20" stroke-width="1.1"/><rect x="2.4" y="4.4" width="3" height="3.2" fill="#f9e3c8"/><rect x="7" y="9.6" width="3.2" height="3" fill="#f9e3c8"/><path d="M12.2 -0.10000000000000009 L13.299999999999999 2.6999999999999997 L16.099999999999998 3.8 L13.299999999999999 4.9 L12.2 7.699999999999999 L11.1 4.9 L8.299999999999999 3.8 L11.1 2.6999999999999997 Z" fill="#fff4a8" stroke="#c2900a" stroke-width="1" stroke-linejoin="round"/></svg>
<svg style="position:absolute;left:462px;top:54px" width="16" height="16" viewBox="0 0 16 16"><circle cx="7" cy="8.8" r="6.5" fill="#2f9a3f" stroke="#227a30" stroke-width=".8"/><path d="M10.3 6.6 A4 4 0 1 0 10.3 11" fill="none" stroke="#fff" stroke-width="2.3"/><path d="M12.4 -0.10000000000000009 L13.299999999999999 2.6999999999999997 L16.099999999999998 3.8 L13.299999999999999 4.9 L12.4 7.699999999999999 L11.1 4.9 L8.299999999999999 3.8 L11.1 2.6999999999999997 Z" fill="#fff4a8" stroke="#c2900a" stroke-width="1" stroke-linejoin="round"/></svg>
<svg style="position:absolute;left:489.5px;top:60.0px" width="8" height="5" viewBox="0 0 8 5"><path d="M0 0 H8 L4 5 Z" fill="#7b7b7b"/></svg>
<svg style="position:absolute;left:506.8px;top:52.2px" width="3" height="20" viewBox="0 0 3 20"><rect x="0" y="0" width="1.5" height="2.8" rx=".5" fill="#9a8c6c"/><rect x="1.5" y="0.8" width=".8" height="1.6" fill="#ebe7dd"/><rect x="0" y="6" width="1.5" height="2.8" rx=".5" fill="#9a8c6c"/><rect x="1.5" y="6.8" width=".8" height="1.6" fill="#ebe7dd"/><rect x="0" y="12" width="1.5" height="2.8" rx=".5" fill="#9a8c6c"/><rect x="1.5" y="12.8" width=".8" height="1.6" fill="#ebe7dd"/><rect x="0" y="18" width="1.5" height="2.8" rx=".5" fill="#9a8c6c"/><rect x="1.5" y="18.8" width=".8" height="1.6" fill="#ebe7dd"/></svg>
<svg style="position:absolute;left:517px;top:54px" width="16" height="16" viewBox="0 0 16 16"><path d="M0.8 6 H5.5 L6.8 7.4 H12 V14.6 H0.8 Z" fill="#f6d58e" stroke="#b8862a" stroke-width=".9"/><path d="M0.8 14.6 L3.6 9.4 H15.2 L12 14.6 Z" fill="#fbe6ad" stroke="#b8862a" stroke-width=".9"/><circle cx="7" cy="4" r="3.4" fill="#6a55b5"/><circle cx="6.2" cy="3.1" r="1.2" fill="#b4a6e6"/><circle cx="12.2" cy="5.6" r="3.3" fill="#3a9a4a"/><circle cx="11.4" cy="4.7" r="1.1" fill="#9ad89e"/></svg>
<svg style="position:absolute;left:545px;top:54px" width="16" height="16" viewBox="0 0 16 16"><path d="M0.8 6 H5.5 L6.8 7.4 H12 V14.6 H0.8 Z" fill="#f6d58e" stroke="#b8862a" stroke-width=".9"/><path d="M0.8 14.6 L3.6 9.4 H15.2 L12 14.6 Z" fill="#fbe6ad" stroke="#b8862a" stroke-width=".9"/><rect x="6" y="2.6" width="8" height="5.6" fill="#f3f6fc" stroke="#8aa0c8" stroke-width=".9"/><rect x="8" y="1" width="4" height="2" fill="#9ab0d8"/></svg>
<svg style="position:absolute;left:572.5px;top:53.5px" width="17" height="17" viewBox="0 0 17 17"><g transform="rotate(-38 8.5 8.5)"><rect x="3.4" y="5.4" width="12.6" height="5.8" rx="1.6" fill="#f4cf7a" stroke="#b07a20" stroke-width=".9"/><rect x="1" y="5" width="5" height="6.6" fill="#8e8e98" stroke="#5f5f68" stroke-width=".7"/><path d="M1 5 L-1.6 4.2 V12.4 L1 11.6 Z" fill="#fff6c2" stroke="#e6c050" stroke-width=".6"/><circle cx="12" cy="8.3" r="1" fill="#2a58b0"/></g></svg>
<svg style="position:absolute;left:600.5px;top:60.0px" width="8" height="5" viewBox="0 0 8 5"><path d="M0 0 H8 L4 5 Z" fill="#7b7b7b"/></svg>
<svg style="position:absolute;left:617.8px;top:52.2px" width="3" height="20" viewBox="0 0 3 20"><rect x="0" y="0" width="1.5" height="2.8" rx=".5" fill="#9a8c6c"/><rect x="1.5" y="0.8" width=".8" height="1.6" fill="#ebe7dd"/><rect x="0" y="6" width="1.5" height="2.8" rx=".5" fill="#9a8c6c"/><rect x="1.5" y="6.8" width=".8" height="1.6" fill="#ebe7dd"/><rect x="0" y="12" width="1.5" height="2.8" rx=".5" fill="#9a8c6c"/><rect x="1.5" y="12.8" width=".8" height="1.6" fill="#ebe7dd"/><rect x="0" y="18" width="1.5" height="2.8" rx=".5" fill="#9a8c6c"/><rect x="1.5" y="18.8" width=".8" height="1.6" fill="#ebe7dd"/></svg>
<svg style="position:absolute;left:627px;top:54px" width="16" height="16" viewBox="0 0 16 16"><rect x="5.5" y="3.5" width="10" height="12" fill="#d9d9d9" stroke="#bcbcbc" stroke-width=".8"/><path d="M7.5 6.5 H13.5 M7.5 9 H13.5 M7.5 11.5 H13.5" stroke="#bcbcbc" stroke-width=".7"/><path d="M3 0.8 H8 V6 H10.6 L5.5 11.6 L0.4 6 H3 Z" fill="#dedede" stroke="#b4b4b4" stroke-width=".9"/><rect x="3.5" y="12.5" width="4" height="2" fill="#c4c4c4"/></svg>
<svg style="position:absolute;left:655.5px;top:60.0px" width="8" height="5" viewBox="0 0 8 5"><path d="M0 0 H8 L4 5 Z" fill="#c6c2bf"/></svg>
<svg style="position:absolute;left:674px;top:54px" width="16" height="16" viewBox="0 0 16 16"><rect x="5.5" y="0.5" width="10" height="12" fill="#d9d9d9" stroke="#bcbcbc" stroke-width=".8"/><path d="M7.5 3.5 H13.5 M7.5 6 H13.5 M7.5 8.5 H13.5" stroke="#bcbcbc" stroke-width=".7"/><path d="M3 15.2 H8 V10 H10.6 L5.5 4.4 L0.4 10 H3 Z" fill="#dedede" stroke="#b4b4b4" stroke-width=".9"/><rect x="7" y="1.5" width="4" height="1.6" fill="#c4c4c4"/></svg>
<svg style="position:absolute;left:703.5px;top:60.0px" width="8" height="5" viewBox="0 0 8 5"><path d="M0 0 H8 L4 5 Z" fill="#c6c2bf"/></svg>
<svg style="position:absolute;left:724px;top:54px" width="16" height="16" viewBox="0 0 16 16"><path d="M15.5 5.6 H9 V2.6 L3.4 8 L9 13.4 V10.4 H15.5 Z" fill="#dadada" stroke="#b9b9b9" stroke-width=".9"/><path d="M2.4 0.6 V5.4 M0 3 H4.8 M0.8 1.2 L4 4.8 M4 1.2 L0.8 4.8" stroke="#b5b5b5" stroke-width=".7"/></svg>
<svg style="position:absolute;left:752px;top:54px" width="16" height="16" viewBox="0 0 16 16"><path d="M15 5.4 H8 V2 L0.8 8 L8 14 V10.6 H15 Z" fill="#fbd86a" stroke="#c88a10" stroke-width="1.2" stroke-linejoin="round"/><path d="M14 6.6 H7.2 V4.2 L2.6 8" fill="none" stroke="#fff3c0" stroke-width=".9"/></svg>
<svg style="position:absolute;left:779.5px;top:60.0px" width="8" height="5" viewBox="0 0 8 5"><path d="M0 0 H8 L4 5 Z" fill="#5c5c5c"/></svg>
<svg style="position:absolute;left:800px;top:54px" width="16" height="16" viewBox="0 0 16 16"><path d="M1 5.4 H8 V2 L15.2 8 L8 14 V10.6 H1 Z" fill="#dcdcdc" stroke="#bcbcbc" stroke-width="1" stroke-linejoin="round"/></svg>
<svg style="position:absolute;left:828px;top:60.0px" width="8" height="5" viewBox="0 0 8 5"><path d="M0 0 H8 L4 5 Z" fill="#c6c2bf"/></svg>
<div style="position:absolute;left:848px;top:53px;width:1px;height:16px;background:#ebebeb;box-shadow:-1px 0 0 #c6c6c6;"></div>
<svg style="position:absolute;left:860px;top:54px" width="16" height="16" viewBox="0 0 16 16"><rect x="0.8" y="6.5" width="11" height="8.5" fill="#d8d8d8" stroke="#bdbdbd" stroke-width=".8"/><rect x="0.8" y="6.5" width="11" height="2" fill="#c6c6c6"/><path d="M7.5 8.5 L10 6 M9.4 3.4 L12.8 6.8 M10.4 4.4 L13 1.8 L14.6 3.4 L12 6" stroke="#b0b0b0" stroke-width="1.2" fill="none"/></svg>
<div style="position:absolute;left:743px;top:84px;width:141px;height:27px;background:#e2e2e2;border-radius:4px;"></div>
<div class="inp" style="position:absolute;left:744px;top:85px;width:139px;height:25px;"></div>
<svg style="position:absolute;left:748px;top:88px" width="18" height="19" viewBox="0 0 18 19"><circle cx="7.2" cy="7.4" r="5.2" fill="#fff" stroke="#28308a" stroke-width="2.6"/><path d="M3.6 6.4 A3.8 3.8 0 0 1 8 3.6" fill="none" stroke="#9fb0e8" stroke-width="1.1"/><path d="M11.2 11.6 L15.6 16.6" stroke="#1a1a1a" stroke-width="2.8" stroke-linecap="round"/></svg>
<span class="t" style="left:768px;top:87.5px;font-size:14.5px;color:#b4b4b4;letter-spacing:-0.09px;">Quick Access</span>
<svg style="position:absolute;left:890.6px;top:84px" width="2" height="30" viewBox="0 0 2 30"><rect x="0" y="0" width="1.6" height="3.4" rx=".8" fill="#9c8f70"/><rect x="0" y="7" width="1.6" height="3.4" rx=".8" fill="#9c8f70"/><rect x="0" y="14" width="1.6" height="3.4" rx=".8" fill="#9c8f70"/><rect x="0" y="21" width="1.6" height="3.4" rx=".8" fill="#9c8f70"/><rect x="0" y="28" width="1.6" height="3.4" rx=".8" fill="#9c8f70"/></svg>
<svg style="position:absolute;left:910px;top:91px" width="16" height="15" viewBox="0 0 16 15"><rect x="0.6" y="3.6" width="11.8" height="10.8" fill="#fff" stroke="#8a7c5c" stroke-width="1.1"/><rect x="0.2" y="3.2" width="12.6" height="2.2" fill="#4f78c4"/><path d="M4.8 5.8 V14.4 M4.8 10 H12.4" stroke="#8a7c5c" stroke-width="1"/><path d="M12.2 -0.2999999999999998 L13.299999999999999 2.5 L16.099999999999998 3.6 L13.299999999999999 4.7 L12.2 7.5 L11.1 4.7 L8.299999999999999 3.6 L11.1 2.5 Z" fill="#fff4a8" stroke="#c2900a" stroke-width="1" stroke-linejoin="round"/></svg>
<div style="position:absolute;left:940px;top:89px;width:1px;height:17px;background:#cfcfcf;"></div>
<div style="position:absolute;left:947px;top:85px;width:167px;height:26px;border:1px solid #a9a9a9;border-radius:4px;background:linear-gradient(#e4e4e4,#dadada);box-sizing:border-box;"></div>
<svg style="position:absolute;left:954px;top:91px" width="16" height="15" viewBox="0 0 16 15"><path d="M0 7.5 H4" stroke="#3a62b8" stroke-width="1.4"/><path d="M4 4.4 Q7.6 2.6 7.6 7.5 Q7.6 12.4 4 10.6 Z" fill="#6f96dc" stroke="#2f58b0" stroke-width="1"/><path d="M8 2.2 V12.8" stroke="#2f58b0" stroke-width="1.6"/><path d="M9.4 4.8 H11.6 Q14 5 14 7.5 Q14 10 11.6 10.2 H9.4 Z" fill="#f4d06a" stroke="#b8861a" stroke-width=".9"/><path d="M14 6.2 H16 M14 8.8 H16" stroke="#b8861a" stroke-width="1"/></svg>
<span class="t" style="left:972.5px;top:89.8px;font-size:14.5px;color:#3c3c3c;letter-spacing:0.11px;">Plug-in Development</span>
<svg style="position:absolute;left:1122px;top:90px" width="16" height="16" viewBox="0 0 16 16"><defs><linearGradient id="cylgb" x1="0" x2="1"><stop offset="0" stop-color="#e89a10"/><stop offset=".45" stop-color="#ffe868"/><stop offset="1" stop-color="#e09010"/></linearGradient></defs><rect x="0.6" y="8.6" width="7" height="6" fill="#dff4fb" stroke="#1f3a78" stroke-width="1.2"/><rect x="0.6" y="8.6" width="7" height="2" fill="#5a9ae0" stroke="#1f3a78" stroke-width=".8"/><path d="M2.5 7.4 V3.7 H7.4" fill="none" stroke="#1f3a8a" stroke-width="1.2"/><path d="M0.8 5.8 L2.5 7.6 L4.2 5.8 Z M6 2 L7.8 3.7 L6 5.4 Z" fill="#1f3a8a"/><rect x="9.4" y="0.4" width="5.4" height="8.4" rx="1.6" fill="url(#cylgb)" stroke="#c8820a" stroke-width="1"/><path d="M9.8 2.2 H14.4" stroke="#c8820a" stroke-width=".7"/></svg>
<span class="t" style="left:1141px;top:89.0px;font-size:14.5px;color:#3c3c3c;letter-spacing:-0.03px;">Team Synchronizing</span>
<svg style="position:absolute;left:1284px;top:90px" width="16" height="16" viewBox="0 0 16 16"><path d="M5 6.5 L1.2 4 M4.2 9 L0.6 9.3 M5 11.5 L2 14.8 M11 6.5 L14.6 4.4 M11.8 9 L15.4 9.5 M11 11.5 L13.6 14.6 M6.4 4.2 L4.2 0.8 M9.4 4.2 L11.4 1" stroke="#1f4a3a" stroke-width="1.1" fill="none"/><ellipse cx="8" cy="9.2" rx="3.7" ry="4.9" fill="#9bd08a" stroke="#2a6a5a" stroke-width="1"/><ellipse cx="7.2" cy="7.6" rx="1.6" ry="2" fill="#e4f6cf"/><circle cx="8" cy="4.4" r="1.9" fill="#5fa77a" stroke="#2a6a5a" stroke-width=".8"/></svg>
<span class="t" style="left:1302.5px;top:89.0px;font-size:14.5px;color:#3c3c3c;letter-spacing:-0.06px;">Debug</span>
<div style="position:absolute;left:94px;top:123px;width:1221px;height:609px;background:#fff;border:1px solid #a9a9a9;border-radius:8px 8px 7px 7px;box-sizing:border-box;box-shadow:0 1px 3px rgba(0,0,0,.22);"></div>
<div style="position:absolute;left:95px;top:124px;width:1219px;height:31px;background:linear-gradient(#ebebeb,#e3e3e3);border-radius:7px 7px 0 0;"></div>
<div style="position:absolute;left:95px;top:155px;width:1219px;height:1px;background:#a9a9a9;"></div>
<div style="position:absolute;left:987px;top:123px;width:154px;height:33px;background:#fff;border:1px solid #c9c9c9;border-bottom:none;border-radius:8px 8px 0 0;box-sizing:border-box;"></div>
<svg style="position:absolute;left:102px;top:133px" width="11" height="14" viewBox="0 0 11 14"><path d="M0.6 0.6 H7.4 L10.4 3.6 V13.4 H0.6 Z" fill="#f8fbff" stroke="#a8862e" stroke-width="1.2"/><path d="M7.4 0.6 V3.6 H10.4 Z" fill="#f0c860" stroke="#a8862e" stroke-width=".7"/><path d="M6 3.6 V9 Q6 11 4.3 11 Q3.2 11 2.8 10.2" fill="none" stroke="#1f5fa8" stroke-width="1.8"/></svg>
<span class="t" style="left:119px;top:130.5px;font-size:14.5px;color:#3c3c3c;letter-spacing:0.40px;">ProductoWebServ</span>
<svg style="position:absolute;left:272px;top:132px" width="16" height="16" viewBox="0 0 16 16"><defs><linearGradient id="cylga" x1="0" x2="1"><stop offset="0" stop-color="#e89a10"/><stop offset=".45" stop-color="#ffe868"/><stop offset="1" stop-color="#e09010"/></linearGradient></defs><rect x="0.6" y="8.6" width="7" height="6" fill="#dff4fb" stroke="#1f3a78" stroke-width="1.2"/><rect x="0.6" y="8.6" width="7" height="2" fill="#5a9ae0" stroke="#1f3a78" stroke-width=".8"/><path d="M2.5 7.4 V3.7 H7.4" fill="none" stroke="#1f3a8a" stroke-width="1.2"/><path d="M0.8 5.8 L2.5 7.6 L4.2 5.8 Z M6 2 L7.8 3.7 L6 5.4 Z" fill="#1f3a8a"/><rect x="9.4" y="0.4" width="5.4" height="8.4" rx="1.6" fill="url(#cylga)" stroke="#c8820a" stroke-width="1"/><path d="M9.8 2.2 H14.4" stroke="#c8820a" stroke-width=".7"/></svg>
<span class="t" style="left:291px;top:130.5px;font-size:14.5px;color:#3c3c3c;letter-spacing:-0.27px;">MANIFEST.MF</span>
<svg style="position:absolute;left:417px;top:133px" width="11" height="14" viewBox="0 0 11 14"><path d="M0.6 0.6 H7.4 L10.4 3.6 V13.4 H0.6 Z" fill="#fff" stroke="#a8862e" stroke-width="1.2"/><path d="M7.4 0.6 V3.6 H10.4 Z" fill="#f0c860" stroke="#a8862e" stroke-width=".7"/><path d="M2.4 5.4 H8.4 M2.4 7.4 H8.4 M2.4 9.4 H8.4 M2.4 11.4 H8.4" stroke="#6f8fce" stroke-width=".9"/></svg>
<span class="t" style="left:434.5px;top:130.5px;font-size:14.5px;color:#3c3c3c;letter-spacing:0.41px;">configuracion.t</span>
<svg style="position:absolute;left:566.5px;top:133px" width="11" height="14" viewBox="0 0 11 14"><path d="M0.6 0.6 H7.4 L10.4 3.6 V13.4 H0.6 Z" fill="#f8fbff" stroke="#a8862e" stroke-width="1.2"/><path d="M7.4 0.6 V3.6 H10.4 Z" fill="#f0c860" stroke="#a8862e" stroke-width=".7"/><path d="M6 3.6 V9 Q6 11 4.3 11 Q3.2 11 2.8 10.2" fill="none" stroke="#1f5fa8" stroke-width="1.8"/></svg>
<span class="t" style="left:584.5px;top:130.5px;font-size:14.5px;color:#3c3c3c;letter-spacing:0.07px;">Cliente.java</span>
<svg style="position:absolute;left:694px;top:133px" width="11" height="14" viewBox="0 0 11 14"><path d="M0.6 0.6 H7.4 L10.4 3.6 V13.4 H0.6 Z" fill="#f8fbff" stroke="#a8862e" stroke-width="1.2"/><path d="M7.4 0.6 V3.6 H10.4 Z" fill="#f0c860" stroke="#a8862e" stroke-width=".7"/><path d="M6 3.6 V9 Q6 11 4.3 11 Q3.2 11 2.8 10.2" fill="none" stroke="#1f5fa8" stroke-width="1.8"/></svg>
<span class="t" style="left:711px;top:130.5px;font-size:14.5px;color:#3c3c3c;letter-spacing:-0.08px;">GenericService.</span>
<svg style="position:absolute;left:846px;top:133px" width="11" height="14" viewBox="0 0 11 14"><path d="M0.6 0.6 H7.4 L10.4 3.6 V13.4 H0.6 Z" fill="#f8fbff" stroke="#a8862e" stroke-width="1.2"/><path d="M7.4 0.6 V3.6 H10.4 Z" fill="#f0c860" stroke="#a8862e" stroke-width=".7"/><path d="M6 3.6 V9 Q6 11 4.3 11 Q3.2 11 2.8 10.2" fill="none" stroke="#1f5fa8" stroke-width="1.8"/></svg>
<span class="t" style="left:863px;top:130.5px;font-size:14.5px;color:#3c3c3c;letter-spacing:0.34px;">ClientePart.jav</span>
<svg style="position:absolute;left:991px;top:133px" width="15" height="13" viewBox="0 0 15 13"><rect x="0.6" y="0.6" width="13.8" height="11.8" fill="#fdfeff" stroke="#7a98d4" stroke-width="1.1"/><rect x="0.6" y="0.6" width="13.8" height="1.8" fill="#a9c2ee"/><rect x="2.5" y="4" width="2.7" height="2.7" fill="#8cc4f4"/><rect x="6.1" y="4" width="2.7" height="2.7" fill="#4ea64a"/><rect x="9.7" y="4" width="2.7" height="2.7" fill="#a4d0f6"/><rect x="2.5" y="7.8" width="2.7" height="2.7" fill="#4ea64a"/><rect x="6.1" y="7.8" width="2.7" height="2.7" fill="#f08a3a"/><rect x="9.7" y="7.8" width="2.7" height="2.7" fill="#f0cc3a"/></svg>
<span class="t" style="left:1011px;top:130.5px;font-size:14.5px;color:#303030;letter-spacing:0.52px;">*Application.e4</span>
<svg style="position:absolute;left:1122px;top:134.7px" width="11" height="11" viewBox="0 0 11 11"><path d="M1 0.8 L3.6 0.8 L5.5 3.2 L7.4 0.8 L10 0.8 L10 3 L7.8 5.5 L10 8 L10 10.2 L7.4 10.2 L5.5 7.8 L3.6 10.2 L1 10.2 L1 8 L3.2 5.5 L1 3 Z" fill="#fff" stroke="#000" stroke-width="1.3" stroke-linejoin="round"/></svg>
<span class="t" style="left:1159px;top:126.0px;font-size:12px;color:#4a4a4a;letter-spacing:0.00px;">»</span>
<span class="t" style="left:1166px;top:133.0px;font-size:11px;color:#4a4a4a;letter-spacing:-0.25px;">10</span>
<svg style="position:absolute;left:1259px;top:135px" width="11" height="5" viewBox="0 0 11 5"><rect x="0.7" y="0.7" width="9.4" height="3.2" fill="#fff" stroke="#1f1f1f" stroke-width="1.3"/></svg>
<svg style="position:absolute;left:1287px;top:134px" width="10" height="10" viewBox="0 0 10 10"><rect x="2.8" y="0.7" width="6" height="4.6" fill="#fff" stroke="#1f1f1f" stroke-width="1.3"/><rect x="2.8" y="0.4" width="6" height="1.6" fill="#1f1f1f"/><rect x="0.7" y="4" width="6" height="4.6" fill="#fff" stroke="#1f1f1f" stroke-width="1.3"/><rect x="0.7" y="3.7" width="6" height="1.6" fill="#1f1f1f"/></svg>
<div style="position:absolute;left:174.5px;top:693px;width:1123.5px;height:1px;background:#a2a2a2;"></div>
<div style="position:absolute;left:112px;top:714px;width:63px;height:1px;background:#a2a2a2;"></div>
<div style="position:absolute;left:174px;top:693px;width:1px;height:22px;background:#a2a2a2;"></div>
<div style="position:absolute;left:228px;top:693px;width:1px;height:22px;background:#a2a2a2;"></div>
<svg style="position:absolute;left:115px;top:696px" width="16" height="14" viewBox="0 0 16 14"><rect x="0.6" y="0.6" width="14.3" height="12.3" fill="#fff" stroke="#6a8ac8" stroke-width="1.1"/><rect x="0.6" y="0.6" width="14.3" height="2.2" fill="#7fa0dc"/><path d="M2.4 5.6 H5.6 M2.4 8 H5.6 M2.4 10.4 H5.6" stroke="#8aa8e0" stroke-width="1.1"/><path d="M7.2 5.6 H13 M7.2 8 H13 M7.2 10.4 H13" stroke="#a8a8a8" stroke-width="1"/></svg>
<span class="t" style="left:135.5px;top:694.5px;font-size:14.5px;color:#303030;letter-spacing:0.05px;">Form</span>
<svg style="position:absolute;left:178.5px;top:696px" width="17" height="14" viewBox="0 0 17 14"><rect x="6.6" y="0.6" width="3.4" height="3.2" fill="#cfe0fb" stroke="#5a86d8" stroke-width="1"/><path d="M8.3 4 V6.4 M2.6 9 V6.6 H14 V9 M8.3 6.4 V9" fill="none" stroke="#9a9a9a" stroke-width=".9"/><rect x="0.9" y="9" width="3.4" height="3.4" fill="#8fd07a" stroke="#3f9a3a" stroke-width=".9"/><rect x="6.6" y="9" width="3.4" height="3.4" fill="#8fd07a" stroke="#3f9a3a" stroke-width=".9"/><rect x="12.3" y="9" width="3.4" height="3.4" fill="#4aa84a" stroke="#2f8a2a" stroke-width=".9"/></svg>
<span class="t" style="left:199px;top:694.5px;font-size:14.5px;color:#303030;letter-spacing:0.11px;">XMI</span>
<svg style="position:absolute;left:1039.3px;top:743.2px" width="3" height="24" viewBox="0 0 3 24"><rect x="0" y="0" width="1.6" height="3" rx=".5" fill="#8f8060"/><rect x="1.6" y="0.8" width=".8" height="1.8" fill="#ebe7dd"/><rect x="0" y="6" width="1.6" height="3" rx=".5" fill="#8f8060"/><rect x="1.6" y="6.8" width=".8" height="1.8" fill="#ebe7dd"/><rect x="0" y="12" width="1.6" height="3" rx=".5" fill="#8f8060"/><rect x="1.6" y="12.8" width=".8" height="1.8" fill="#ebe7dd"/><rect x="0" y="18" width="1.6" height="3" rx=".5" fill="#8f8060"/><rect x="1.6" y="18.8" width=".8" height="1.8" fill="#ebe7dd"/></svg>
<div style="position:absolute;left:121px;top:170px;width:489px;height:516px;border:1px solid #ececec;border-radius:11px;box-sizing:border-box;box-shadow:0 1px 3px rgba(0,0,0,.09);"></div>
<div style="position:absolute;left:583px;top:177px;width:16px;height:499px;background:#ececec;"></div>
<div style="position:absolute;left:586px;top:177px;width:12.5px;height:498.5px;background:#fcfcfc;border:1px solid #aaa49e;border-radius:6.5px;box-sizing:border-box;"></div>
<div style="position:absolute;left:587px;top:190.5px;width:10.5px;height:472px;background:linear-gradient(90deg,#d6d4d2,#dedcda 50%,#d8d6d4);border-radius:5.5px;"></div>
<svg style="position:absolute;left:589.5px;top:182.5px" width="6" height="4" viewBox="0 0 6 4"><path d="M0 4 H6 L3 0 Z" fill="#555"/></svg>
<svg style="position:absolute;left:589.5px;top:666.5px" width="6" height="4" viewBox="0 0 6 4"><path d="M0 0 H6 L3 4 Z" fill="#555"/></svg>
<div style="position:absolute;left:586px;top:214px;width:12.5px;height:410px;background:linear-gradient(90deg,#f3f3f3,#ffffff 45%,#efefef);border:1px solid #a49e98;border-radius:6.5px;box-sizing:border-box;"></div>
<svg style="position:absolute;left:589.5px;top:414px" width="6" height="8" viewBox="0 0 6 8"><path d="M0 0.5 H6 M0 3.5 H6 M0 6.5 H6" stroke="#b8b4b0" stroke-width="1"/></svg>
<div style="position:absolute;left:132px;top:446px;width:451px;height:23px;background:linear-gradient(#e9e7e5,#d9d7d5 90%,#d2d0ce);"></div>
<svg style="position:absolute;left:144px;top:177.4px" width="7" height="7.2" viewBox="0 0 7 7.2"><path d="M0.6 0.6 L5.8 3.6 L0.6 6.6 Z" fill="#8a8a8a" stroke="#444" stroke-width=".9" stroke-linejoin="round"/></svg>
<span class="t" style="left:176px;top:171.5px;font-size:14.5px;color:#2e2e2e;letter-spacing:-0.44px;font-style:italic;">Addons</span>
<svg style="position:absolute;left:144px;top:200.4px" width="7" height="7.2" viewBox="0 0 7 7.2"><path d="M0.6 0.6 L5.8 3.6 L0.6 6.6 Z" fill="#8a8a8a" stroke="#444" stroke-width=".9" stroke-linejoin="round"/></svg>
<span class="t" style="left:176px;top:194.5px;font-size:14.5px;color:#2e2e2e;letter-spacing:-0.01px;font-style:italic;">Binding Contexts</span>
<svg style="position:absolute;left:144px;top:223.4px" width="7" height="7.2" viewBox="0 0 7 7.2"><path d="M0.6 0.6 L5.8 3.6 L0.6 6.6 Z" fill="#8a8a8a" stroke="#444" stroke-width=".9" stroke-linejoin="round"/></svg>
<span class="t" style="left:176px;top:217.5px;font-size:14.5px;color:#2e2e2e;letter-spacing:-0.05px;font-style:italic;">BindingTables</span>
<svg style="position:absolute;left:144px;top:246.4px" width="7" height="7.2" viewBox="0 0 7 7.2"><path d="M0.6 0.6 L5.8 3.6 L0.6 6.6 Z" fill="#8a8a8a" stroke="#444" stroke-width=".9" stroke-linejoin="round"/></svg>
<span class="t" style="left:176px;top:240.5px;font-size:14.5px;color:#2e2e2e;letter-spacing:-0.15px;font-style:italic;">Handlers</span>
<span class="t" style="left:176px;top:263.5px;font-size:14.5px;color:#2e2e2e;letter-spacing:0.00px;font-style:italic;">Part Descriptors</span>
<svg style="position:absolute;left:144px;top:292.4px" width="7" height="7.2" viewBox="0 0 7 7.2"><path d="M0.6 0.6 L5.8 3.6 L0.6 6.6 Z" fill="#8a8a8a" stroke="#444" stroke-width=".9" stroke-linejoin="round"/></svg>
<span class="t" style="left:176px;top:286.5px;font-size:14.5px;color:#2e2e2e;letter-spacing:-0.52px;font-style:italic;">Commands</span>
<span class="t" style="left:176px;top:309.5px;font-size:14.5px;color:#2e2e2e;letter-spacing:-0.21px;font-style:italic;">Command Categories</span>
<svg style="position:absolute;left:143.5px;top:338.5px" width="8" height="7" viewBox="0 0 8 7"><path d="M0.6 0.6 H7.4 L4 6.2 Z" fill="#5a5a5a" stroke="#3c3c3c" stroke-width=".9" stroke-linejoin="round"/></svg>
<span class="t" style="left:176px;top:332.5px;font-size:14.5px;color:#2e2e2e;letter-spacing:-0.03px;font-style:italic;">Windows</span>
<span class="t" style="left:198px;top:516.5px;font-size:14.5px;color:#2e2e2e;letter-spacing:-0.15px;font-style:italic;">Handlers</span>
<span class="t" style="left:198px;top:539.5px;font-size:14.5px;color:#2e2e2e;letter-spacing:0.05px;font-style:italic;">Windows</span>
<svg style="position:absolute;left:166px;top:568.4px" width="7" height="7.2" viewBox="0 0 7 7.2"><path d="M0.6 0.6 L5.8 3.6 L0.6 6.6 Z" fill="#8a8a8a" stroke="#444" stroke-width=".9" stroke-linejoin="round"/></svg>
<span class="t" style="left:198px;top:562.5px;font-size:14.5px;color:#2e2e2e;letter-spacing:-0.07px;font-style:italic;">Controls</span>
<span class="t" style="left:198px;top:585.5px;font-size:14.5px;color:#2e2e2e;letter-spacing:-0.27px;font-style:italic;">Shared Elements</span>
<svg style="position:absolute;left:166px;top:614.4px" width="7" height="7.2" viewBox="0 0 7 7.2"><path d="M0.6 0.6 L5.8 3.6 L0.6 6.6 Z" fill="#8a8a8a" stroke="#444" stroke-width=".9" stroke-linejoin="round"/></svg>
<span class="t" style="left:198px;top:608.5px;font-size:14.5px;color:#2e2e2e;letter-spacing:-0.32px;font-style:italic;">TrimBars</span>
<span class="t" style="left:176px;top:631.5px;font-size:14.5px;color:#2e2e2e;letter-spacing:0.07px;font-style:italic;">Menu Contributions</span>
<span class="t" style="left:176px;top:654.5px;font-size:14.5px;color:#2e2e2e;letter-spacing:0.06px;font-style:italic;">Toolbar Contributions</span>
<svg style="position:absolute;left:155px;top:360.5px" width="8" height="7" viewBox="0 0 8 7"><path d="M0.6 0.6 H7.4 L4 6.2 Z" fill="#5a5a5a" stroke="#3c3c3c" stroke-width=".9" stroke-linejoin="round"/></svg>
<svg style="position:absolute;left:167.5px;top:358.5px" width="15" height="15" viewBox="0 0 15 15"><defs><linearGradient id="wg" x1="0" y1="0" x2="0" y2="1"><stop offset="0" stop-color="#d9ecfb"/><stop offset="1" stop-color="#ffffff"/></linearGradient></defs><rect x="0.6" y="0.6" width="13.4" height="13.4" fill="url(#wg)" stroke="#a08a58" stroke-width="1.1"/><rect x="0.2" y="0.2" width="14.2" height="2.2" fill="#4a78c4"/><path d="M14 2.4 V14" stroke="#c9d6e6" stroke-width="1"/></svg>
<span class="t" style="left:186.5px;top:355.5px;font-size:14.5px;color:#2a2a2a;letter-spacing:0.36px;">Trimmed Window</span>
<span class="t" style="left:307.5px;top:355.5px;font-size:14.5px;color:#97763a;letter-spacing:-0.06px;">- Sistema Punto De Venta UNQ</span>
<svg style="position:absolute;left:166px;top:383.5px" width="8" height="7" viewBox="0 0 8 7"><path d="M0.6 0.6 H7.4 L4 6.2 Z" fill="#5a5a5a" stroke="#3c3c3c" stroke-width=".9" stroke-linejoin="round"/></svg>
<svg style="position:absolute;left:178.5px;top:382.5px" width="15" height="14" viewBox="0 0 15 14"><rect x="0.6" y="0.6" width="13.8" height="12.4" fill="#fff" stroke="#a08a58" stroke-width="1.1"/><rect x="0.1" y="0.1" width="14.8" height="2.4" fill="#3a62b4"/><rect x="0.6" y="2.5" width="13.8" height="4.2" fill="#cfe0f6"/><path d="M2.6 4.4 H4 M5 4.4 H6.4 M7.4 4.4 H8.8 M9.8 4.4 H11.2" stroke="#2a2a6a" stroke-width="1"/><path d="M0.6 6.9 H14.4" stroke="#7f9fd0" stroke-width=".8"/></svg>
<span class="t" style="left:197px;top:378.5px;font-size:14.5px;color:#2a2a2a;letter-spacing:0.16px;">Main Menu</span>
<svg style="position:absolute;left:177px;top:406.9px" width="7" height="7.2" viewBox="0 0 7 7.2"><path d="M0.6 0.6 L5.8 3.6 L0.6 6.6 Z" fill="#8a8a8a" stroke="#444" stroke-width=".9" stroke-linejoin="round"/></svg>
<svg style="position:absolute;left:189.5px;top:405.5px" width="15" height="14" viewBox="0 0 15 14"><rect x="0.6" y="0.6" width="13.8" height="12.4" fill="#fff" stroke="#a08a58" stroke-width="1.1"/><rect x="0.1" y="0.1" width="14.8" height="2.4" fill="#3a62b4"/><rect x="0.6" y="2.5" width="13.8" height="4.2" fill="#cfe0f6"/><path d="M2.6 4.4 H4 M5 4.4 H6.4 M7.4 4.4 H8.8 M9.8 4.4 H11.2" stroke="#2a2a6a" stroke-width="1"/><path d="M0.6 6.9 H14.4" stroke="#7f9fd0" stroke-width=".8"/></svg>
<span class="t" style="left:208px;top:401.5px;font-size:14.5px;color:#2a2a2a;letter-spacing:0.24px;">Menu</span>
<span class="t" style="left:248px;top:401.5px;font-size:14.5px;color:#97763a;letter-spacing:0.07px;">- Archivo</span>
<svg style="position:absolute;left:177px;top:429.9px" width="7" height="7.2" viewBox="0 0 7 7.2"><path d="M0.6 0.6 L5.8 3.6 L0.6 6.6 Z" fill="#8a8a8a" stroke="#444" stroke-width=".9" stroke-linejoin="round"/></svg>
<svg style="position:absolute;left:189.5px;top:428.5px" width="15" height="14" viewBox="0 0 15 14"><rect x="0.6" y="0.6" width="13.8" height="12.4" fill="#fff" stroke="#a08a58" stroke-width="1.1"/><rect x="0.1" y="0.1" width="14.8" height="2.4" fill="#3a62b4"/><rect x="0.6" y="2.5" width="13.8" height="4.2" fill="#cfe0f6"/><path d="M2.6 4.4 H4 M5 4.4 H6.4 M7.4 4.4 H8.8 M9.8 4.4 H11.2" stroke="#2a2a6a" stroke-width="1"/><path d="M0.6 6.9 H14.4" stroke="#7f9fd0" stroke-width=".8"/></svg>
<span class="t" style="left:208px;top:424.5px;font-size:14.5px;color:#2a2a2a;letter-spacing:0.24px;">Menu</span>
<span class="t" style="left:248px;top:424.5px;font-size:14.5px;color:#97763a;letter-spacing:-0.64px;">- Caja</span>
<svg style="position:absolute;left:177px;top:452.5px" width="8" height="7" viewBox="0 0 8 7"><path d="M0.6 0.6 H7.4 L4 6.2 Z" fill="#5a5a5a" stroke="#3c3c3c" stroke-width=".9" stroke-linejoin="round"/></svg>
<svg style="position:absolute;left:189.5px;top:451.5px" width="15" height="14" viewBox="0 0 15 14"><rect x="0.6" y="0.6" width="13.8" height="12.4" fill="#fff" stroke="#a08a58" stroke-width="1.1"/><rect x="0.1" y="0.1" width="14.8" height="2.4" fill="#3a62b4"/><rect x="0.6" y="2.5" width="13.8" height="4.2" fill="#cfe0f6"/><path d="M2.6 4.4 H4 M5 4.4 H6.4 M7.4 4.4 H8.8 M9.8 4.4 H11.2" stroke="#2a2a6a" stroke-width="1"/><path d="M0.6 6.9 H14.4" stroke="#7f9fd0" stroke-width=".8"/></svg>
<span class="t" style="left:208px;top:447.5px;font-size:14.5px;color:#fbfbfb;letter-spacing:0.24px;">Menu</span>
<span class="t" style="left:248px;top:447.5px;font-size:14.5px;color:#f7f5f0;letter-spacing:-0.07px;">- Ayuda</span>
<svg style="position:absolute;left:188px;top:475.9px" width="7" height="7.2" viewBox="0 0 7 7.2"><path d="M0.6 0.6 L5.8 3.6 L0.6 6.6 Z" fill="#8a8a8a" stroke="#444" stroke-width=".9" stroke-linejoin="round"/></svg>
<svg style="position:absolute;left:201.6px;top:473px" width="15" height="15" viewBox="0 0 15 15"><rect x="1.6" y="0.6" width="10" height="5.4" fill="#fff" stroke="#a89a5e" stroke-width="1.1"/><path d="M3.4 2.5 H9.8 M3.4 4.5 H9.8" stroke="#4a66a8" stroke-width="1"/><rect x="0.6" y="6.4" width="12" height="4.4" fill="#cfe6f8" stroke="#2a5cb8" stroke-width="1.2"/><path d="M2.4 8.6 H5" stroke="#5a7ac0" stroke-width="1"/><rect x="1.6" y="11" width="10" height="3.6" fill="#fff" stroke="#5a6a9a" stroke-width="1"/><path d="M3.2 12.8 H5" stroke="#5a7ac0" stroke-width="1"/><path d="M5.6 6.4 L13.8 10.6 L5.6 14.8 Z" fill="#4eae48" stroke="#2a8a32" stroke-width=".9" stroke-linejoin="round"/><path d="M6.6 8.2 L11 10.4 L6.6 11 Z" fill="#8fd880"/></svg>
<span class="t" style="left:219.5px;top:470.5px;font-size:14.5px;color:#2a2a2a;letter-spacing:0.29px;">HandledMenuItem</span>
<span class="t" style="left:346px;top:470.5px;font-size:14.5px;color:#97763a;letter-spacing:-0.12px;">- Ayuda en linea</span>
<svg style="position:absolute;left:188px;top:498.9px" width="7" height="7.2" viewBox="0 0 7 7.2"><path d="M0.6 0.6 L5.8 3.6 L0.6 6.6 Z" fill="#8a8a8a" stroke="#444" stroke-width=".9" stroke-linejoin="round"/></svg>
<svg style="position:absolute;left:201.6px;top:496px" width="15" height="15" viewBox="0 0 15 15"><rect x="1.6" y="0.6" width="10" height="5.4" fill="#fff" stroke="#a89a5e" stroke-width="1.1"/><path d="M3.4 2.5 H9.8 M3.4 4.5 H9.8" stroke="#4a66a8" stroke-width="1"/><rect x="0.6" y="6.4" width="12" height="4.4" fill="#cfe6f8" stroke="#2a5cb8" stroke-width="1.2"/><path d="M2.4 8.6 H5" stroke="#5a7ac0" stroke-width="1"/><rect x="1.6" y="11" width="10" height="3.6" fill="#fff" stroke="#5a6a9a" stroke-width="1"/><path d="M3.2 12.8 H5" stroke="#5a7ac0" stroke-width="1"/><path d="M5.6 6.4 L13.8 10.6 L5.6 14.8 Z" fill="#4eae48" stroke="#2a8a32" stroke-width=".9" stroke-linejoin="round"/><path d="M6.6 8.2 L11 10.4 L6.6 11 Z" fill="#8fd880"/></svg>
<span class="t" style="left:219.5px;top:493.5px;font-size:14.5px;color:#2a2a2a;letter-spacing:0.29px;">HandledMenuItem</span>
<span class="t" style="left:346px;top:493.5px;font-size:14.5px;color:#97763a;letter-spacing:-0.03px;">- Acerca de</span>
<div style="position:absolute;left:629px;top:170px;width:659px;height:517px;border:1px solid #ececec;border-radius:11px;box-sizing:border-box;box-shadow:0 1px 3px rgba(0,0,0,.09);"></div>
<div style="position:absolute;left:645px;top:177px;width:627px;height:33px;background:linear-gradient(#565656 0%,#3a3a3a 45%,#1c1c1c 100%);"></div>
<svg style="position:absolute;left:651px;top:187px" width="15" height="14" viewBox="0 0 15 14"><rect x="0.6" y="0.6" width="13.8" height="12.4" fill="#fff" stroke="#a08a58" stroke-width="1.1"/><rect x="0.1" y="0.1" width="14.8" height="2.4" fill="#3a62b4"/><rect x="0.6" y="2.5" width="13.8" height="4.2" fill="#cfe0f6"/><path d="M2.6 4.4 H4 M5 4.4 H6.4 M7.4 4.4 H8.8 M9.8 4.4 H11.2" stroke="#2a2a6a" stroke-width="1"/><path d="M0.6 6.9 H14.4" stroke="#7f9fd0" stroke-width=".8"/></svg>
<span class="t" style="left:676px;top:183.8px;font-size:19.7px;color:#ffffff;letter-spacing:0.36px;font-weight:bold;">Menu</span>
<span class="t" style="left:804.5px;top:226.0px;font-size:14.5px;color:#3c3c3c;letter-spacing:-0.09px;">Id</span>
<div class="inp" style="position:absolute;left:828px;top:223px;width:436px;height:25px;"></div>
<span class="t" style="left:780.5px;top:258.0px;font-size:14.5px;color:#3c3c3c;letter-spacing:0.13px;">Label</span>
<div class="inp" style="position:absolute;left:828px;top:255px;width:436px;height:25px;"></div>
<span class="t" style="left:832px;top:258.0px;font-size:14.5px;color:#2e2e2e;letter-spacing:0.16px;">Ayuda</span>
<span class="t" style="left:740px;top:290.0px;font-size:14.5px;color:#3c3c3c;letter-spacing:0.29px;">Mnemonics</span>
<div class="inp" style="position:absolute;left:828px;top:287px;width:436px;height:25px;"></div>
<span class="t" style="left:761.5px;top:316.6px;font-size:14.5px;color:#3c3c3c;letter-spacing:0.14px;">Children</span>
<div style="position:absolute;left:827px;top:318px;width:183px;height:157px;border:1px solid #b6b2aa;background:#fff;box-sizing:border-box;overflow:hidden;"></div>
<div style="position:absolute;left:828px;top:319px;width:181px;height:23px;background:linear-gradient(#eceae8,#dddbd9 90%,#d4d2d0);"></div>
<svg style="position:absolute;left:832px;top:323.8px" width="15" height="15" viewBox="0 0 15 15"><rect x="1.6" y="0.6" width="10" height="5.4" fill="#fff" stroke="#a89a5e" stroke-width="1.1"/><path d="M3.4 2.5 H9.8 M3.4 4.5 H9.8" stroke="#4a66a8" stroke-width="1"/><rect x="0.6" y="6.4" width="12" height="4.4" fill="#cfe6f8" stroke="#2a5cb8" stroke-width="1.2"/><path d="M2.4 8.6 H5" stroke="#5a7ac0" stroke-width="1"/><rect x="1.6" y="11" width="10" height="3.6" fill="#fff" stroke="#5a6a9a" stroke-width="1"/><path d="M3.2 12.8 H5" stroke="#5a7ac0" stroke-width="1"/><path d="M5.6 6.4 L13.8 10.6 L5.6 14.8 Z" fill="#4eae48" stroke="#2a8a32" stroke-width=".9" stroke-linejoin="round"/><path d="M6.6 8.2 L11 10.4 L6.6 11 Z" fill="#8fd880"/></svg>
<span class="t" style="left:849.5px;top:321.0px;font-size:14.5px;color:#fbfbfb;letter-spacing:0.25px;">HandledMenuItem</span>
<span class="t" style="left:976px;top:321.0px;font-size:14.5px;color:#f6f3ec;letter-spacing:-0.50px;width:32px;overflow:hidden;">- Ayu</span>
<svg style="position:absolute;left:832px;top:346.3px" width="15" height="15" viewBox="0 0 15 15"><rect x="1.6" y="0.6" width="10" height="5.4" fill="#fff" stroke="#a89a5e" stroke-width="1.1"/><path d="M3.4 2.5 H9.8 M3.4 4.5 H9.8" stroke="#4a66a8" stroke-width="1"/><rect x="0.6" y="6.4" width="12" height="4.4" fill="#cfe6f8" stroke="#2a5cb8" stroke-width="1.2"/><path d="M2.4 8.6 H5" stroke="#5a7ac0" stroke-width="1"/><rect x="1.6" y="11" width="10" height="3.6" fill="#fff" stroke="#5a6a9a" stroke-width="1"/><path d="M3.2 12.8 H5" stroke="#5a7ac0" stroke-width="1"/><path d="M5.6 6.4 L13.8 10.6 L5.6 14.8 Z" fill="#4eae48" stroke="#2a8a32" stroke-width=".9" stroke-linejoin="round"/><path d="M6.6 8.2 L11 10.4 L6.6 11 Z" fill="#8fd880"/></svg>
<span class="t" style="left:849.5px;top:343.6px;font-size:14.5px;color:#2a2a2a;letter-spacing:0.25px;">HandledMenuItem</span>
<span class="t" style="left:976px;top:343.6px;font-size:14.5px;color:#97763a;letter-spacing:-0.50px;width:32px;overflow:hidden;">- Ace</span>
<div style="position:absolute;left:827px;top:477.5px;width:183px;height:14px;background:#ececec;"></div>
<div style="position:absolute;left:827px;top:478px;width:183px;height:13px;background:#fafafa;border:1px solid #b4b0aa;border-radius:7px;box-sizing:border-box;"></div>
<div style="position:absolute;left:841px;top:479px;width:155.5px;height:11px;background:linear-gradient(#d9d7d5,#e2e0de);border-radius:5.5px;"></div>
<div style="position:absolute;left:840px;top:478px;width:110px;height:13px;background:linear-gradient(#ffffff,#ececec);border:1px solid #a2a2a2;border-radius:7px;box-sizing:border-box;"></div>
<svg style="position:absolute;left:832px;top:481.5px" width="4" height="6" viewBox="0 0 4 6"><path d="M4 0 V6 L0 3 Z" fill="#9a9a9a"/></svg>
<svg style="position:absolute;left:1001px;top:481.5px" width="4" height="6" viewBox="0 0 4 6"><path d="M0 0 V6 L4 3 Z" fill="#4a4a4a"/></svg>
<svg style="position:absolute;left:891px;top:482.5px" width="8" height="4" viewBox="0 0 8 4"><path d="M0.5 0 V4 M3.5 0 V4 M6.5 0 V4" stroke="#bcb8b4" stroke-width="1"/></svg>
<div class="btn" style="position:absolute;left:1021px;top:361px;width:243px;height:27px;background:linear-gradient(#f9b193,#f19873 45%,#ee8c65);border-color:#cf6f4e;box-shadow:inset 0 1px 0 rgba(255,255,255,.35);"></div>
<svg style="position:absolute;left:1127px;top:367px" width="8" height="14" viewBox="0 0 8 14"><path d="M4 0.6 L7.4 5 H5.4 V13.4 H2.6 V5 H0.6 Z" fill="#a6e08a" stroke="#2f8a2a" stroke-width="1"/></svg>
<span class="t" style="left:1143.8px;top:365.0px;font-size:14.5px;color:#444;letter-spacing:-1.05px;">Up</span>
<div class="btn" style="position:absolute;left:1021px;top:395px;width:243px;height:27px;"></div>
<svg style="position:absolute;left:1117px;top:401.5px" width="8" height="14" viewBox="0 0 8 14"><path d="M4 13.4 L7.4 9 H5.4 V0.6 H2.6 V9 H0.6 Z" fill="#a6e08a" stroke="#2f8a2a" stroke-width="1"/></svg>
<span class="t" style="left:1133.5px;top:399.0px;font-size:14.5px;color:#444;letter-spacing:0.14px;">Down</span>
<div class="btn" style="position:absolute;left:1021px;top:430px;width:163px;height:25px;"></div>
<span class="t" style="left:1027.5px;top:433.0px;font-size:14.5px;color:#444;letter-spacing:0.23px;">Handled MenuItem</span>
<svg style="position:absolute;left:1169.5px;top:438px" width="6" height="12" viewBox="0 0 6 12"><path d="M0 4 H6 L3 0.5 Z M0 8 H6 L3 11.5 Z" fill="#777"/></svg>
<div class="btn" style="position:absolute;left:1191px;top:429.5px;width:73px;height:26.5px;"></div>
<svg style="position:absolute;left:1197px;top:435px" width="15" height="15" viewBox="0 0 15 15"><rect x="0.6" y="0.6" width="11.6" height="12.6" fill="#fff" stroke="#7f9fd4" stroke-width="1.1"/><rect x="0.6" y="0.6" width="11.6" height="2.6" fill="#9ab8e8"/><path d="M2.4 5.4 H10.4 M2.4 7.6 H10.4 M2.4 9.8 H10.4" stroke="#9a9a9a" stroke-width=".9"/><path d="M4.4 3.2 V13" stroke="#b8c8e8" stroke-width=".8"/><circle cx="11.2" cy="11.4" r="3.2" fill="#4aa83a" stroke="#2a7a22" stroke-width=".8"/><path d="M9.4 11.4 H13" stroke="#fff" stroke-width="1.2"/></svg>
<svg style="position:absolute;left:1197px;top:435px" width="15" height="15" viewBox="0 0 15 15"><path d="M11.2 9.6 V13.2" stroke="#fff" stroke-width="1.2"/></svg>
<span class="t" style="left:1216.5px;top:433.0px;font-size:14.5px;color:#444;letter-spacing:-0.07px;">Add ...</span>
<div class="btn" style="position:absolute;left:1021px;top:463.5px;width:243px;height:26.5px;"></div>
<svg style="position:absolute;left:1106px;top:469.5px" width="15" height="15" viewBox="0 0 15 15"><rect x="0.6" y="0.6" width="11.6" height="12.6" fill="#fff" stroke="#7f9fd4" stroke-width="1.1"/><rect x="0.6" y="0.6" width="11.6" height="2.6" fill="#9ab8e8"/><path d="M2.4 5.4 H10.4 M2.4 7.6 H10.4 M2.4 9.8 H10.4" stroke="#9a9a9a" stroke-width=".9"/><path d="M4.4 3.2 V13" stroke="#b8c8e8" stroke-width=".8"/><circle cx="11.2" cy="11.4" r="3.2" fill="#f07a2a" stroke="#c0501a" stroke-width=".8"/><path d="M9.4 11.4 H13" stroke="#fff" stroke-width="1.2"/></svg>
<span class="t" style="left:1125.5px;top:467.0px;font-size:14.5px;color:#444;letter-spacing:-0.10px;">Remove</span>
<span class="t" style="left:769.5px;top:499.6px;font-size:14.5px;color:#3c3c3c;letter-spacing:0.85px;">Tooltip</span>
<div class="inp" style="position:absolute;left:828px;top:496.5px;width:436px;height:25px;"></div>
<span class="t" style="left:763px;top:533.0px;font-size:14.5px;color:#3c3c3c;letter-spacing:-0.42px;">Icon URI</span>
<div class="inp" style="position:absolute;left:828px;top:530px;width:182px;height:25px;"></div>
<div class="btn" style="position:absolute;left:1021px;top:529.5px;width:243px;height:26.5px;"></div>
<svg style="position:absolute;left:1109.5px;top:535px" width="16" height="16" viewBox="0 0 16 16"><circle cx="6.2" cy="6.2" r="4.6" fill="#fdf6e4" stroke="#d89a3a" stroke-width="1.5"/><path d="M9.6 9.8 L14 14.4" stroke="#b8741a" stroke-width="2.2" stroke-linecap="round"/></svg>
<span class="t" style="left:1130.5px;top:533.0px;font-size:14.5px;color:#444;letter-spacing:-0.12px;">Find ...</span>
<span class="t" style="left:652.5px;top:566.2px;font-size:14.5px;color:#3c3c3c;letter-spacing:0.14px;">Visible-When Expression</span>
<div class="btn" style="position:absolute;left:828px;top:563px;width:436px;height:25px;"></div>
<span class="t" style="left:834.5px;top:566.0px;font-size:14.5px;color:#3c3c3c;letter-spacing:-0.02px;">&lt;None&gt;</span>
<svg style="position:absolute;left:1249px;top:570px" width="6" height="12" viewBox="0 0 6 12"><path d="M0.5 4 H5.5 L3 1 Z M0.5 8 H5.5 L3 11 Z" fill="#5a5a5a"/></svg>
<span class="t" style="left:713.5px;top:596.0px;font-size:14.5px;color:#3c3c3c;letter-spacing:-0.14px;">To Be Rendered</span>
<span class="t" style="left:771.5px;top:625.0px;font-size:14.5px;color:#3c3c3c;letter-spacing:0.42px;">Visible</span>
<div style="position:absolute;left:830.2px;top:598.9px;width:13.8px;height:14px;background:linear-gradient(#f59a70,#ea6a3c);border:1px solid #c8562e;border-radius:2.5px;box-sizing:border-box;"></div>
<svg style="position:absolute;left:830.2px;top:596.9px" width="17" height="17" viewBox="0 0 17 17"><path d="M2.8 8.4 L6.6 12.2 L11.6 5.6 L15.4 2.2 L12.6 6.8 L7 13.8 L6.2 13.8 L1.8 9.4 Z" fill="#7a3a22" stroke="#7a3a22" stroke-width=".8" stroke-linejoin="round"/></svg>
<div style="position:absolute;left:830.2px;top:628px;width:13.8px;height:14px;background:linear-gradient(#f59a70,#ea6a3c);border:1px solid #c8562e;border-radius:2.5px;box-sizing:border-box;"></div>
<svg style="position:absolute;left:830.2px;top:626px" width="17" height="17" viewBox="0 0 17 17"><path d="M2.8 8.4 L6.6 12.2 L11.6 5.6 L15.4 2.2 L12.6 6.8 L7 13.8 L6.2 13.8 L1.8 9.4 Z" fill="#7a3a22" stroke="#7a3a22" stroke-width=".8" stroke-linejoin="round"/></svg>
<div style="position:absolute;left:702px;top:654px;width:570px;height:1px;background:#989898;"></div>
<div style="position:absolute;left:702px;top:654px;width:1px;height:22px;background:#989898;"></div>
<div style="position:absolute;left:812px;top:654px;width:1px;height:22px;background:#989898;"></div>
<div style="position:absolute;left:645px;top:675px;width:58px;height:1px;background:#989898;"></div>
<span class="t" style="left:649.7px;top:655.0px;font-size:14.5px;color:#2e2e2e;letter-spacing:0.44px;">Default</span>
<span class="t" style="left:707.3px;top:655.0px;font-size:14.5px;color:#2e2e2e;letter-spacing:0.33px;">Supplementary</span>
<div style="position:absolute;left:50px;top:123.5px;width:38.5px;height:128px;background:#e5e5e5;border-radius:3px 3px 9px 9px;overflow:hidden;"><div style="position:absolute;left:0;top:0;width:4px;height:100%;background:linear-gradient(#b0b0b0,#c2c2c2 60%,#d0d0d0);"></div><div style="position:absolute;right:0;top:0;width:4px;height:100%;background:linear-gradient(#b0b0b0,#c2c2c2 60%,#d0d0d0);"></div><div style="position:absolute;left:0;top:0;width:100%;height:3px;background:#fbfbfb;border-top:1px solid #b6b6b6;box-sizing:border-box;border-radius:3px 3px 0 0;"></div><div style="position:absolute;left:0;top:75%;width:100%;height:25%;box-sizing:border-box;border:1px solid rgba(255,255,255,.0);border-top:none;border-bottom:2px solid #fcfcfc;border-radius:0 0 9px 9px;box-shadow:inset 1px 0 0 rgba(255,255,255,.75),inset -1px 0 0 rgba(255,255,255,.75);"></div></div>
<svg style="position:absolute;left:58.5px;top:130.0px" width="22" height="2" viewBox="0 0 22 2"><rect x="0" y="0" width="3.4" height="1.2" fill="#b4a888"/><rect x="0" y="1.2" width="3.4" height="0.8" fill="#f4f0e8"/><rect x="6" y="0" width="3.4" height="1.2" fill="#b4a888"/><rect x="6" y="1.2" width="3.4" height="0.8" fill="#f4f0e8"/><rect x="12" y="0" width="3.4" height="1.2" fill="#b4a888"/><rect x="12" y="1.2" width="3.4" height="0.8" fill="#f4f0e8"/><rect x="18" y="0" width="3.4" height="1.2" fill="#b4a888"/><rect x="18" y="1.2" width="3.4" height="0.8" fill="#f4f0e8"/></svg>
<svg style="position:absolute;left:65px;top:144.3px" width="9" height="8" viewBox="0 0 9 8"><rect x="2.6" y="0.6" width="5.6" height="4" fill="#f4f4f4" stroke="#5a5048" stroke-width="1.2"/><rect x="0.6" y="3" width="5.6" height="4" fill="#f4f4f4" stroke="#5a5048" stroke-width="1.2"/></svg>
<svg style="position:absolute;left:64.5px;top:169px" width="11" height="13" viewBox="0 0 11 13"><path d="M1 0 V12.6 M1 3.2 H4.6 M1 9.6 H4.6" stroke="#4a5a8a" stroke-width="1.1" fill="none"/><rect x="4.8" y="0.6" width="5.4" height="5.2" fill="#f6c48a" stroke="#b85a1a" stroke-width="1"/><path d="M7.5 0.6 V5.8 M4.8 3.2 H10.2" stroke="#b85a1a" stroke-width=".8"/><rect x="4.8" y="7" width="5.4" height="5.2" fill="#f6c48a" stroke="#b85a1a" stroke-width="1"/><path d="M7.5 7 V12.2 M4.8 9.6 H10.2" stroke="#b85a1a" stroke-width=".8"/></svg>
<svg style="position:absolute;left:63.5px;top:196px" width="11" height="16" viewBox="0 0 11 16"><path d="M3 4 V13.6 H6 M3 7.4 H6" stroke="#5a6a8a" stroke-width="1.1" fill="none"/><circle cx="3" cy="2.8" r="2.3" fill="#4aa84a" stroke="#2a7a2a" stroke-width=".7"/><circle cx="8" cy="7.6" r="2.3" fill="#4aa84a" stroke="#2a7a2a" stroke-width=".7"/><circle cx="8" cy="13.4" r="2.3" fill="#4aa84a" stroke="#2a7a2a" stroke-width=".7"/></svg>
<svg style="position:absolute;left:62px;top:225px" width="16" height="15" viewBox="0 0 16 15"><g transform="translate(-0.6 0.6)"><path d="M0 3 H4" stroke="#2a52b0" stroke-width="1.3"/><path d="M4 3 L8.6 0.2 V5.8 Z" fill="#6f96dc" stroke="#2a52b0" stroke-width=".9"/><path d="M9.6 0.8 L13 3 L9.6 5.2 Z" fill="#fbe9a8" stroke="#c8962a" stroke-width=".9"/><path d="M12.6 2.2 H15.2 M12.6 3.8 H15.2" stroke="#c8962a" stroke-width=".9"/></g><g transform="translate(0 7.6)"><path d="M0 3 H4" stroke="#2a52b0" stroke-width="1.3"/><path d="M4 3 L8.6 0.2 V5.8 Z" fill="#6f96dc" stroke="#2a52b0" stroke-width=".9"/><path d="M9.6 0.8 L13 3 L9.6 5.2 Z" fill="#fbe9a8" stroke="#c8962a" stroke-width=".9"/><path d="M12.6 2.2 H15.2 M12.6 3.8 H15.2" stroke="#c8962a" stroke-width=".9"/></g></svg>
<div style="position:absolute;left:1321px;top:123.5px;width:39px;height:267px;background:#e5e5e5;border-radius:3px 3px 9px 9px;overflow:hidden;"><div style="position:absolute;left:0;top:0;width:4px;height:100%;background:linear-gradient(#b0b0b0,#c2c2c2 60%,#d0d0d0);"></div><div style="position:absolute;right:0;top:0;width:4px;height:100%;background:linear-gradient(#b0b0b0,#c2c2c2 60%,#d0d0d0);"></div><div style="position:absolute;left:0;top:0;width:100%;height:3px;background:#fbfbfb;border-top:1px solid #b6b6b6;box-sizing:border-box;border-radius:3px 3px 0 0;"></div><div style="position:absolute;left:0;top:75%;width:100%;height:25%;box-sizing:border-box;border:1px solid rgba(255,255,255,.0);border-top:none;border-bottom:2px solid #fcfcfc;border-radius:0 0 9px 9px;box-shadow:inset 1px 0 0 rgba(255,255,255,.75),inset -1px 0 0 rgba(255,255,255,.75);"></div></div>
<svg style="position:absolute;left:1329.5px;top:130.0px" width="22" height="2" viewBox="0 0 22 2"><rect x="0" y="0" width="3.4" height="1.2" fill="#b4a888"/><rect x="0" y="1.2" width="3.4" height="0.8" fill="#f4f0e8"/><rect x="6" y="0" width="3.4" height="1.2" fill="#b4a888"/><rect x="6" y="1.2" width="3.4" height="0.8" fill="#f4f0e8"/><rect x="12" y="0" width="3.4" height="1.2" fill="#b4a888"/><rect x="12" y="1.2" width="3.4" height="0.8" fill="#f4f0e8"/><rect x="18" y="0" width="3.4" height="1.2" fill="#b4a888"/><rect x="18" y="1.2" width="3.4" height="0.8" fill="#f4f0e8"/></svg>
<svg style="position:absolute;left:1335.8px;top:144.3px" width="9" height="8" viewBox="0 0 9 8"><rect x="2.6" y="0.6" width="5.6" height="4" fill="#f4f4f4" stroke="#5a5048" stroke-width="1.2"/><rect x="0.6" y="3" width="5.6" height="4" fill="#f4f4f4" stroke="#5a5048" stroke-width="1.2"/></svg>
<svg style="position:absolute;left:1332.5px;top:169px" width="16" height="15" viewBox="0 0 16 15"><path d="M4 2.6 H14.6 V11 L11.4 14.4 H4 Z" fill="#fdf8e8" stroke="#c8a050" stroke-width="1"/><path d="M11.4 14.4 V11 H14.6" fill="#efe0b8" stroke="#c8a050" stroke-width=".8"/><path d="M4.6 11.6 H7.4 M4.6 13 H6.4" stroke="#4a6ab8" stroke-width=".9"/><circle cx="4.8" cy="4.8" r="4.4" fill="#e8343a" stroke="#a8181e" stroke-width=".8"/><path d="M2.8 2.8 L6.8 6.8 M6.8 2.8 L2.8 6.8" stroke="#fff" stroke-width="1.5"/></svg>
<svg style="position:absolute;left:1333px;top:195.5px" width="16" height="16" viewBox="0 0 16 16"><rect x="3.6" y="2.6" width="11" height="12" rx="1" fill="#f6f6fa" stroke="#c8a060" stroke-width="1.2"/><rect x="6.6" y="0.8" width="5" height="3.2" rx="1" fill="#9aa6c0" stroke="#6a7898" stroke-width=".8"/><path d="M8.6 7 H12.6 M8.6 9.4 H12.6 M8.6 11.8 H12.6" stroke="#8a8aa8" stroke-width=".9"/><path d="M0.6 9.4 L3.4 12.4 L8.4 6" fill="none" stroke="#1a52c8" stroke-width="1.9"/></svg>
<svg style="position:absolute;left:1332px;top:223.5px" width="17" height="17" viewBox="0 0 17 17"><rect x="1.6" y="0.8" width="9.6" height="9" fill="#f2f2f6" stroke="#b0a088" stroke-width="1"/><circle cx="6.4" cy="5" r="2.5" fill="#e8444a"/><path d="M12 1.6 Q15.6 1 15 4.6 L14 8.4 Q13.6 11 15.6 14.4 H9.4 V10" fill="#e8ecf6" stroke="#7f8fb8" stroke-width="1"/><path d="M4 9 L7.6 15.4 H0.4 Z" fill="#fbd24a" stroke="#c8901a" stroke-width=".9"/><path d="M4 11 V13.2 M4 14 V14.6" stroke="#4a3a10" stroke-width="1"/></svg>
<svg style="position:absolute;left:1332px;top:252px" width="17" height="15" viewBox="0 0 17 15"><path d="M0 2.8 H5 M3.4 0.8 V4.8 M6 7.6 H11 M9.4 5.6 V9.6 M0 12.4 H5 M3.4 10.4 V14.4" stroke="#5a5a6a" stroke-width="1"/><circle cx="7.6" cy="2.8" r="2.3" fill="#4aa84a" stroke="#2a7a2a" stroke-width=".7"/><circle cx="13.6" cy="7.6" r="2.3" fill="#4aa84a" stroke="#2a7a2a" stroke-width=".7"/><circle cx="7.6" cy="12.4" r="2.3" fill="#4aa84a" stroke="#2a7a2a" stroke-width=".7"/></svg>
<svg style="position:absolute;left:1334px;top:281px" width="14" height="14" viewBox="0 0 14 14"><rect x="0.8" y="0.8" width="12.4" height="9.4" rx="1" fill="#e4ecfb" stroke="#2a52b0" stroke-width="1.7"/><path d="M3.2 4 H9.6 M3.2 6.6 H7.6" stroke="#2a52b0" stroke-width="1.1"/><path d="M7 10.6 V12.4 M3 13 H11" stroke="#2a52b0" stroke-width="1.6"/></svg>
<svg style="position:absolute;left:1332px;top:308px" width="17" height="17" viewBox="0 0 17 17"><g transform="rotate(-38 8.5 8.5)"><rect x="3.4" y="5.4" width="12.6" height="5.8" rx="1.6" fill="#f4cf7a" stroke="#b07a20" stroke-width=".9"/><rect x="1" y="5" width="5" height="6.6" fill="#8e8e98" stroke="#5f5f68" stroke-width=".7"/><path d="M1 5 L-1.6 4.2 V12.4 L1 11.6 Z" fill="#fff6c2" stroke="#e6c050" stroke-width=".6"/><circle cx="12" cy="8.3" r="1" fill="#2a58b0"/></g></svg>
<svg style="position:absolute;left:1335px;top:336px" width="12" height="15" viewBox="0 0 12 15"><rect x="3.6" y="0.6" width="7.6" height="10.4" rx="2.4" fill="#f7d24a" stroke="#c8961a" stroke-width="1"/><rect x="0.6" y="6.6" width="7.4" height="8" fill="#f2f4fa" stroke="#5a6a98" stroke-width="1"/><path d="M2.2 9 H6.4 M2.2 10.8 H6.4 M2.2 12.6 H6.4" stroke="#3a4a88" stroke-width=".8"/></svg>
<span style="position:absolute;left:1333.5px;top:361.5px;font-family:'Liberation Serif',serif;font-weight:bold;font-size:15px;line-height:20px;color:#2a965a;letter-spacing:-0.3px;">J<span style="color:#d8445a;font-size:10.5px;">U</span></span>
</body></html>
